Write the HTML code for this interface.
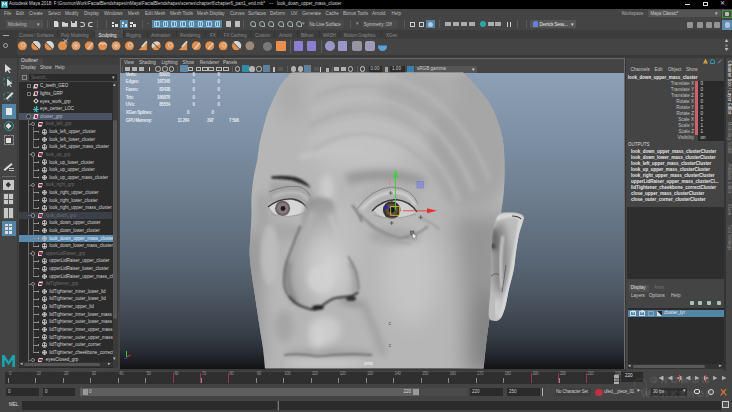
<!DOCTYPE html><html><head><meta charset="utf-8"><style>
*{margin:0;padding:0;box-sizing:border-box}
html,body{width:732px;height:412px;overflow:hidden;background:#444;font-family:"Liberation Sans",sans-serif}
div,body>svg{position:absolute}
.t{white-space:nowrap;line-height:1}
</style></head><body><div style="left:0px;top:0px;width:732px;height:9px;background:#000;"></div>
<div style="left:1px;top:1px;width:7px;height:6.5px;background:#1f8f97;"></div>
<div style="left:2.2px;top:2px;width:4.6px;height:4.5px;background:#e8f4f4;clip-path:polygon(0 100%,0 0,25% 0,50% 45%,75% 0,100% 0,100% 100%,75% 100%,75% 40%,50% 80%,25% 40%,25% 100%)"></div>
<div class="t" style="left:9px;top:1.70px;font-size:4.5px;color:#d8d8d8;">Autodesk Maya 2018: F:\GnomonWork\FacialBlendshapesInMaya\FacialBlendshapes\scenes\chapter6\chapter6_part1_end.mb*&nbsp;&nbsp;&nbsp;---&nbsp;&nbsp;&nbsp;look_down_upper_mass_cluster</div>
<div style="left:685px;top:4px;width:5px;height:0.8px;background:#ddd;"></div>
<div style="left:703px;top:2px;width:5px;height:4px;border:0.8px solid #ddd"></div>
<div class="t" style="left:719.5px;top:1.30px;font-size:5.5px;color:#ddd;">✕</div>
<div class="t" style="left:4px;top:12.20px;font-size:4.6px;color:#bdbdbd;">File</div>
<div class="t" style="left:16px;top:12.20px;font-size:4.6px;color:#bdbdbd;">Edit</div>
<div class="t" style="left:29px;top:12.20px;font-size:4.6px;color:#bdbdbd;">Create</div>
<div class="t" style="left:48px;top:12.20px;font-size:4.6px;color:#bdbdbd;">Select</div>
<div class="t" style="left:65px;top:12.20px;font-size:4.6px;color:#bdbdbd;">Modify</div>
<div class="t" style="left:84px;top:12.20px;font-size:4.6px;color:#bdbdbd;">Display</div>
<div class="t" style="left:104px;top:12.20px;font-size:4.6px;color:#bdbdbd;">Windows</div>
<div class="t" style="left:128px;top:12.20px;font-size:4.6px;color:#bdbdbd;">Mesh</div>
<div class="t" style="left:145px;top:12.20px;font-size:4.6px;color:#bdbdbd;">Edit Mesh</div>
<div class="t" style="left:170px;top:12.20px;font-size:4.6px;color:#bdbdbd;">Mesh Tools</div>
<div class="t" style="left:197px;top:12.20px;font-size:4.6px;color:#bdbdbd;">Mesh Display</div>
<div class="t" style="left:230px;top:12.20px;font-size:4.6px;color:#bdbdbd;">Curves</div>
<div class="t" style="left:248px;top:12.20px;font-size:4.6px;color:#bdbdbd;">Surfaces</div>
<div class="t" style="left:270px;top:12.20px;font-size:4.6px;color:#bdbdbd;">Deform</div>
<div class="t" style="left:291px;top:12.20px;font-size:4.6px;color:#bdbdbd;">UV</div>
<div class="t" style="left:302px;top:12.20px;font-size:4.6px;color:#bdbdbd;">Generate</div>
<div class="t" style="left:325.6px;top:12.20px;font-size:4.6px;color:#bdbdbd;">Cache</div>
<div class="t" style="left:343px;top:12.20px;font-size:4.6px;color:#bdbdbd;">Bonus Tools</div>
<div class="t" style="left:372px;top:12.20px;font-size:4.6px;color:#bdbdbd;">Arnold</div>
<div class="t" style="left:391.5px;top:12.20px;font-size:4.6px;color:#bdbdbd;">Help</div>
<div class="t" style="left:621.4px;top:11.95px;font-size:4.5px;color:#aaa;letter-spacing:-0.060px;">Workspace :</div>
<div style="left:648.3px;top:10.3px;width:72.7px;height:7.2px;background:#555;"></div>
<div class="t" style="left:650.5px;top:11.95px;font-size:4.5px;color:#ccc;letter-spacing:-0.060px;">Maya Classic*</div>
<div class="t" style="left:715px;top:11.30px;font-size:5px;color:#ccc;">▾</div>
<div style="left:722px;top:9.6px;width:10px;height:8.5px;border:0.8px solid #3c9a3c;background:#4a4a4a"></div>
<div style="left:725px;top:12.3px;width:4px;height:4px;background:#bbb;border-radius:1px"></div>
<div style="left:5.5px;top:20.3px;width:37px;height:7.6px;background:#505050;"></div>
<div class="t" style="left:8px;top:23.30px;font-size:4.6px;color:#bbb;">Modeling</div>
<div class="t" style="left:37px;top:22.30px;font-size:5px;color:#bbb;">▾</div>
<div style="left:47px;top:20px;width:0.8px;height:8px;background:#5a5a5a;"></div>
<div style="left:54px;top:20.8px;width:4.5px;height:6.2px;background:#d8d8d8;clip-path:polygon(0 0,65% 0,100% 30%,100% 100%,0 100%)"></div>
<div style="left:62px;top:22px;width:6px;height:4.8px;background:#d0d0d0;clip-path:polygon(0 0,40% 0,50% 20%,100% 20%,100% 100%,0 100%)"></div>
<div style="left:71px;top:21.2px;width:5.5px;height:5.6px;background:#d0d0d0;border-radius:0.5px"></div>
<div style="left:72.3px;top:21.2px;width:3px;height:2px;background:#444;"></div>
<div style="left:80px;top:22px;width:5px;height:4.5px;border:1px solid #d0d0d0;border-left-color:transparent;border-radius:0 3px 3px 0"></div>
<div style="left:88px;top:22px;width:5px;height:4.5px;border:1px solid #d0d0d0;border-right-color:transparent;border-radius:3px 0 0 3px"></div>
<div style="left:97px;top:20px;width:0.8px;height:8px;background:#5a5a5a;"></div>
<div style="left:106px;top:20px;width:0.8px;height:8px;background:#5a5a5a;"></div>
<div style="left:112px;top:21.5px;width:2px;height:2px;background:#ddd;"></div>
<div style="left:115px;top:24px;width:2.5px;height:2.5px;background:#ddd;"></div>
<div style="left:112px;top:25px;width:1.5px;height:1.5px;background:#ddd;"></div>
<div style="left:120px;top:20px;width:8px;height:8px;background:#5285a6;"></div>
<div style="left:121.5px;top:21.5px;width:2px;height:2px;background:#ddd;"></div>
<div style="left:124.5px;top:24px;width:2.5px;height:2.5px;background:#ddd;"></div>
<div style="left:121.5px;top:25px;width:1.5px;height:1.5px;background:#ddd;"></div>
<div style="left:130px;top:21.5px;width:2.5px;height:2.5px;background:#ddd;"></div>
<div style="left:133px;top:24px;width:2.5px;height:2.5px;background:#ddd;"></div>
<div style="left:130px;top:25px;width:1.5px;height:1.5px;background:#ddd;"></div>
<div style="left:142px;top:20px;width:0.8px;height:8px;background:#5a5a5a;"></div>
<div class="t" style="left:147px;top:21.00px;font-size:5px;color:#aaa;">-</div>
<div style="left:152px;top:20px;width:70px;height:8px;background:#5285a6;"></div>
<div style="left:154.0px;top:21px;width:5.5px;height:5.5px;border:0.7px solid #bfe0f0;border-radius:1px;opacity:.85"></div>
<div style="left:156.2px;top:21.8px;width:1px;height:4px;background:#bfe0f0;opacity:.8"></div>
<div style="left:162.7px;top:21px;width:5.5px;height:5.5px;border:0.7px solid #bfe0f0;border-radius:1px;opacity:.85"></div>
<div style="left:164.89999999999998px;top:21.8px;width:1px;height:4px;background:#bfe0f0;opacity:.8"></div>
<div style="left:171.4px;top:21px;width:5.5px;height:5.5px;border:0.7px solid #bfe0f0;border-radius:1px;opacity:.85"></div>
<div style="left:173.6px;top:21.8px;width:1px;height:4px;background:#bfe0f0;opacity:.8"></div>
<div style="left:180.1px;top:21px;width:5.5px;height:5.5px;border:0.7px solid #bfe0f0;border-radius:1px;opacity:.85"></div>
<div style="left:182.29999999999998px;top:21.8px;width:1px;height:4px;background:#bfe0f0;opacity:.8"></div>
<div style="left:188.8px;top:21px;width:5.5px;height:5.5px;border:0.7px solid #bfe0f0;border-radius:1px;opacity:.85"></div>
<div style="left:191.0px;top:21.8px;width:1px;height:4px;background:#bfe0f0;opacity:.8"></div>
<div style="left:197.5px;top:21px;width:5.5px;height:5.5px;border:0.7px solid #bfe0f0;border-radius:1px;opacity:.85"></div>
<div style="left:199.7px;top:21.8px;width:1px;height:4px;background:#bfe0f0;opacity:.8"></div>
<div style="left:206.2px;top:21px;width:5.5px;height:5.5px;border:0.7px solid #bfe0f0;border-radius:1px;opacity:.85"></div>
<div style="left:208.39999999999998px;top:21.8px;width:1px;height:4px;background:#bfe0f0;opacity:.8"></div>
<div style="left:214.89999999999998px;top:21px;width:5.5px;height:5.5px;border:0.7px solid #bfe0f0;border-radius:1px;opacity:.85"></div>
<div style="left:217.09999999999997px;top:21.8px;width:1px;height:4px;background:#bfe0f0;opacity:.8"></div>
<div style="left:226px;top:21px;width:5px;height:6px;background:#ddd;opacity:.8"></div>
<div style="left:235px;top:21px;width:5px;height:6px;background:#ddd;opacity:.8"></div>
<div style="left:243px;top:20px;width:0.8px;height:8px;background:#5a5a5a;"></div>
<div style="left:250.0px;top:21px;width:6px;height:6px;border:1.1px solid #c8d8d0;border-radius:3px 3px 0 3px;opacity:.75"></div>
<div style="left:259.2px;top:21px;width:6px;height:6px;border:1.1px solid #c8d8d0;border-radius:3px 3px 0 3px;opacity:.75"></div>
<div style="left:268.4px;top:21px;width:6px;height:6px;border:1.1px solid #c8d8d0;border-radius:3px 3px 0 3px;opacity:.75"></div>
<div style="left:277.6px;top:21px;width:6px;height:6px;border:1.1px solid #c8d8d0;border-radius:3px 3px 0 3px;opacity:.75"></div>
<div style="left:286.8px;top:21px;width:6px;height:6px;border:1.1px solid #c8d8d0;border-radius:3px 3px 0 3px;opacity:.75"></div>
<div style="left:296.0px;top:21px;width:6px;height:6px;border:1.1px solid #c8d8d0;border-radius:3px 3px 0 3px;opacity:.75"></div>
<div class="t" style="left:301.8px;top:22.30px;font-size:4.5px;color:#999;">▾</div>
<div style="left:307.8px;top:20.3px;width:36.4px;height:7.6px;background:#4a4a4a;"></div>
<div class="t" style="left:309.5px;top:23.15px;font-size:4.5px;color:#c8c8c8;letter-spacing:-0.060px;">No Live Surface</div>
<div style="left:350px;top:20px;width:0.8px;height:8px;background:#5a5a5a;"></div>
<div class="t" style="left:356.4px;top:22.30px;font-size:4.5px;color:#999;">▾</div>
<div style="left:362px;top:20.3px;width:36.3px;height:7.6px;background:#4a4a4a;"></div>
<div class="t" style="left:363.7px;top:23.15px;font-size:4.5px;color:#c8c8c8;letter-spacing:-0.060px;">Symmetry: Off</div>
<div style="left:404.2px;top:20px;width:0.8px;height:8px;background:#5a5a5a;"></div>
<div style="left:410px;top:21.5px;width:5px;height:5px;border:0.8px solid #ccc"></div>
<div style="left:419px;top:21.5px;width:5px;height:5px;border:0.8px solid #ccc"></div>
<div style="left:425.5px;top:19.5px;width:9.5px;height:8.8px;background:#5285a6;"></div>
<div style="left:428px;top:21.5px;width:4.5px;height:5px;background:#cde;opacity:.8;border-radius:50%"></div>
<div style="left:439px;top:20px;width:0.8px;height:8px;background:#5a5a5a;"></div>
<div style="left:445px;top:21.8px;width:6px;height:4.5px;background:#cfcfcf;opacity:.75"></div>
<div style="left:453px;top:21.8px;width:6px;height:4.5px;background:#cfcfcf;opacity:.75"></div>
<div style="left:461px;top:21.8px;width:6px;height:4.5px;background:#cfcfcf;opacity:.75"></div>
<div style="left:469px;top:21.8px;width:6px;height:4.5px;background:#cfcfcf;opacity:.75"></div>
<div style="left:487.5px;top:21.8px;width:6px;height:4.5px;background:#cfcfcf;opacity:.75"></div>
<div style="left:495px;top:21.8px;width:6px;height:4.5px;background:#cfcfcf;opacity:.75"></div>
<div style="left:479.6px;top:21.2px;width:6px;height:6px;background:#2aa7a7;border-radius:50%"></div>
<div style="left:507px;top:21.5px;width:1.2px;height:5px;background:#ccc;"></div>
<div style="left:509.8px;top:21.5px;width:1.2px;height:5px;background:#ccc;"></div>
<div style="left:517.2px;top:20px;width:0.8px;height:8px;background:#5a5a5a;"></div>
<div style="left:526px;top:20px;width:0.8px;height:8px;background:#5a5a5a;"></div>
<div style="left:530px;top:20px;width:46px;height:7.7px;background:#555;border-radius:1px"></div>
<div style="left:533px;top:21.3px;width:4.5px;height:5.5px;background:#6a7fd6;border-radius:2px 2px 0 0"></div>
<div class="t" style="left:539.5px;top:22.75px;font-size:4.5px;color:#eee;letter-spacing:-0.060px;">Derrick Sess...</div>
<div class="t" style="left:570.5px;top:21.80px;font-size:5px;color:#ddd;">▾</div>
<div style="left:687px;top:21.5px;width:6px;height:6px;background:#c8c8c8;opacity:.6;border-radius:1px"></div>
<div style="left:697px;top:21.5px;width:6px;height:6px;background:#c8c8c8;opacity:.6;border-radius:1px"></div>
<div style="left:706px;top:21.5px;width:6px;height:6px;background:#c8c8c8;opacity:.6;border-radius:1px"></div>
<div style="left:714px;top:21.5px;width:6px;height:6px;background:#c8c8c8;opacity:.6;border-radius:1px"></div>
<div style="left:722px;top:19.5px;width:10px;height:10px;background:#5d8ab0;"></div>
<div style="left:724.5px;top:21.5px;width:5px;height:6px;background:#cde;opacity:.7;border-radius:2px"></div>
<div style="left:0px;top:30px;width:732px;height:25px;background:#3f3f3f;"></div>
<div style="left:0px;top:30px;width:17px;height:25px;background:#3a3a3a;"></div>
<div style="left:2.5px;top:34.5px;width:6px;height:1px;background:#aaa;"></div>
<div style="left:3px;top:43px;width:5px;height:5px;border:0.9px solid #aaa;border-radius:50%"></div>
<div style="left:17px;top:30px;width:715px;height:8px;background:#3c3c3c;"></div>
<div style="left:17px;top:38.5px;width:715px;height:16.5px;background:#444;"></div>
<div style="left:94px;top:30px;width:29px;height:8px;background:#4a4a4a;"></div>
<div class="t" style="left:19px;top:34.25px;font-size:4.5px;color:#8a8a8a;letter-spacing:-0.060px;">Curves / Surfaces</div>
<div class="t" style="left:61px;top:34.25px;font-size:4.5px;color:#8a8a8a;letter-spacing:-0.060px;">Poly Modeling</div>
<div class="t" style="left:98.5px;top:34.25px;font-size:4.5px;color:#eee;letter-spacing:-0.060px;">Sculpting</div>
<div class="t" style="left:126px;top:34.25px;font-size:4.5px;color:#8a8a8a;letter-spacing:-0.060px;">Rigging</div>
<div class="t" style="left:151px;top:34.25px;font-size:4.5px;color:#8a8a8a;letter-spacing:-0.060px;">Animation</div>
<div class="t" style="left:180px;top:34.25px;font-size:4.5px;color:#8a8a8a;letter-spacing:-0.060px;">Rendering</div>
<div class="t" style="left:210px;top:34.25px;font-size:4.5px;color:#8a8a8a;letter-spacing:-0.060px;">FX</div>
<div class="t" style="left:223.7px;top:34.25px;font-size:4.5px;color:#8a8a8a;letter-spacing:-0.060px;">FX Caching</div>
<div class="t" style="left:255px;top:34.25px;font-size:4.5px;color:#8a8a8a;letter-spacing:-0.060px;">Custom</div>
<div class="t" style="left:279px;top:34.25px;font-size:4.5px;color:#8a8a8a;letter-spacing:-0.060px;">Arnold</div>
<div class="t" style="left:301px;top:34.25px;font-size:4.5px;color:#8a8a8a;letter-spacing:-0.060px;">Bifrost</div>
<div class="t" style="left:323px;top:34.25px;font-size:4.5px;color:#8a8a8a;letter-spacing:-0.060px;">MASH</div>
<div class="t" style="left:343.7px;top:34.25px;font-size:4.5px;color:#8a8a8a;letter-spacing:-0.060px;">Motion Graphics</div>
<div class="t" style="left:386px;top:34.25px;font-size:4.5px;color:#8a8a8a;letter-spacing:-0.060px;">XGen</div>
<div style="left:57px;top:31px;width:0.7px;height:6px;background:#333;"></div>
<div style="left:94px;top:31px;width:0.7px;height:6px;background:#333;"></div>
<div style="left:123px;top:31px;width:0.7px;height:6px;background:#333;"></div>
<div style="left:147px;top:31px;width:0.7px;height:6px;background:#333;"></div>
<div style="left:176px;top:31px;width:0.7px;height:6px;background:#333;"></div>
<div style="left:205px;top:31px;width:0.7px;height:6px;background:#333;"></div>
<div style="left:218px;top:31px;width:0.7px;height:6px;background:#333;"></div>
<div style="left:250px;top:31px;width:0.7px;height:6px;background:#333;"></div>
<div style="left:274px;top:31px;width:0.7px;height:6px;background:#333;"></div>
<div style="left:297px;top:31px;width:0.7px;height:6px;background:#333;"></div>
<div style="left:319px;top:31px;width:0.7px;height:6px;background:#333;"></div>
<div style="left:339px;top:31px;width:0.7px;height:6px;background:#333;"></div>
<div style="left:381px;top:31px;width:0.7px;height:6px;background:#333;"></div>
<svg width="732" height="20" viewBox="0 38 732 20" style="left:0;top:38px"><circle cx="22.4" cy="45.8" r="4.8" fill="#e2904e" stroke="#2e2e2e" stroke-width="0.5"/><circle cx="23.2" cy="45.0" r="2" fill="none" stroke="#d6d6d6" stroke-width="0.8"/><circle cx="35.78" cy="45.8" r="4.8" fill="#e2904e" stroke="#2e2e2e" stroke-width="0.5"/><path d="M32.38 42.4 A4.8 4.8 0 0 1 39.18 49.199999999999996 Z" fill="#d6d6d6"/><path d="M32.18 42.199999999999996 L39.38 49.4" stroke="#2e2e2e" stroke-width="0.9"/><circle cx="49.16" cy="45.8" r="4.8" fill="#e2904e" stroke="#2e2e2e" stroke-width="0.5"/><path d="M45.76 42.4 A4.8 4.8 0 0 1 52.559999999999995 49.199999999999996 Z" fill="#d6d6d6"/><path d="M45.559999999999995 42.199999999999996 L52.76 49.4" stroke="#2e2e2e" stroke-width="0.9"/><circle cx="62.54" cy="45.8" r="4.8" fill="#e2904e" stroke="#2e2e2e" stroke-width="0.5"/><path d="M63.54 42.8 L67.53999999999999 39.3 M63.54 39.3 L67.53999999999999 42.8" stroke="#d6d6d6" stroke-width="0.9"/><circle cx="75.92" cy="45.8" r="4.8" fill="#e2904e" stroke="#2e2e2e" stroke-width="0.5"/><path d="M71.92 45.8 H79.92 M75.92 41.8 V49.8 M72.92 42.8 L78.92 48.8 M72.92 48.8 L78.92 42.8" stroke="#d6d6d6" stroke-width="0.6"/><circle cx="89.30000000000001" cy="45.8" r="4.8" fill="#e2904e" stroke="#2e2e2e" stroke-width="0.5"/><path d="M87.80000000000001 48.8 L92.80000000000001 42.8" stroke="#d6d6d6" stroke-width="1.3"/><circle cx="102.68" cy="45.8" r="4.8" fill="#e2904e" stroke="#2e2e2e" stroke-width="0.5"/><path d="M98.68 45.3 Q100.68 41.8 102.68 44.3 Q104.68 41.8 106.68 45.3" stroke="#d6d6d6" stroke-width="1.1" fill="none"/><circle cx="116.06" cy="45.8" r="4.8" fill="#e2904e" stroke="#2e2e2e" stroke-width="0.5"/><path d="M112.06 45.8 H120.06 M116.06 41.8 V49.8 M113.06 42.8 L119.06 48.8 M113.06 48.8 L119.06 42.8" stroke="#d6d6d6" stroke-width="0.6"/><circle cx="129.44" cy="45.8" r="4.8" fill="#e2904e" stroke="#2e2e2e" stroke-width="0.5"/><circle cx="130.24" cy="45.0" r="2" fill="none" stroke="#d6d6d6" stroke-width="0.8"/><path d="M137.82 50.599999999999994 L147.32 50.599999999999994 L147.32 41.0 Z" fill="#e2904e" stroke="#2e2e2e" stroke-width="0.5"/><path d="M141.82 46.8 L146.82 41.3" stroke="#d6d6d6" stroke-width="1.8"/><circle cx="156.20000000000002" cy="45.8" r="4.8" fill="#e2904e" stroke="#2e2e2e" stroke-width="0.5"/><path d="M152.00000000000003 48.0 A4.8 4.8 0 0 1 160.4 43.599999999999994 Z" fill="#d6d6d6"/><path d="M152.60000000000002 42.199999999999996 L159.8 49.4" stroke="#2e2e2e" stroke-width="0.9"/><circle cx="169.58" cy="45.8" r="4.8" fill="#e2904e" stroke="#2e2e2e" stroke-width="0.5"/><circle cx="170.38000000000002" cy="45.0" r="2" fill="none" stroke="#d6d6d6" stroke-width="0.8"/><path d="M177.96 50.599999999999994 L187.46 50.599999999999994 L187.46 41.0 Z" fill="#e2904e" stroke="#2e2e2e" stroke-width="0.5"/><path d="M181.96 46.8 L186.96 41.3" stroke="#d6d6d6" stroke-width="1.8"/><circle cx="196.34" cy="45.8" r="4.8" fill="#e2904e" stroke="#2e2e2e" stroke-width="0.5"/><path d="M194.84 48.8 L199.84 42.8" stroke="#d6d6d6" stroke-width="1.3"/><circle cx="209.72000000000003" cy="45.8" r="4.8" fill="#e2904e" stroke="#2e2e2e" stroke-width="0.5"/><path d="M208.22000000000003 48.8 L213.22000000000003 42.8" stroke="#d6d6d6" stroke-width="1.3"/><circle cx="223.10000000000002" cy="45.8" r="4.8" fill="#e2904e" stroke="#2e2e2e" stroke-width="0.5"/><circle cx="223.90000000000003" cy="45.0" r="2" fill="none" stroke="#d6d6d6" stroke-width="0.8"/><circle cx="236.48000000000002" cy="45.8" r="4.8" fill="#e2904e" stroke="#2e2e2e" stroke-width="0.5"/><path d="M233.08 42.4 A4.8 4.8 0 0 1 239.88000000000002 49.199999999999996 Z" fill="#d6d6d6"/><path d="M232.88000000000002 42.199999999999996 L240.08 49.4" stroke="#2e2e2e" stroke-width="0.9"/><circle cx="249.86" cy="45.8" r="4.8" fill="#9a8878" stroke="#2e2e2e" stroke-width="0.5"/></svg>
<div style="left:263px;top:41.5px;width:9px;height:9px;background:#bbb;border-radius:50%;opacity:.45"></div>
<div style="left:276px;top:41px;width:9.5px;height:10px;background:#e8904c;border-radius:1px"></div>
<div style="left:289.6px;top:40px;width:0.8px;height:13px;background:#5a5a5a;"></div>
<div style="left:294px;top:41px;width:9px;height:10px;background:#8a7fd0;border-radius:1px"></div>
<div style="left:307px;top:41px;width:9px;height:10px;background:#8a7fd0;border-radius:1px"></div>
<div style="left:321px;top:40px;width:0.8px;height:13px;background:#5a5a5a;"></div>
<div style="left:325px;top:41px;width:9.5px;height:9.5px;background:#9a96c8;border-radius:50%"></div>
<div style="left:338px;top:41px;width:9px;height:10px;background:#9a96c8;border-radius:1px"></div>
<div style="left:352px;top:41px;width:10px;height:10px;background:#aab;border-radius:2px;opacity:.8"></div>
<div style="left:365px;top:41px;width:10px;height:10px;background:#b6b0d8;border-radius:2px;opacity:.8"></div>
<div style="left:378px;top:42px;width:9px;height:9px;background:#5aa0d8;border-radius:50%;clip-path:polygon(0 40%,100% 40%,100% 100%,0 100%)"></div>
<div style="left:724.5px;top:39px;width:4px;height:3px;background:#bbb;clip-path:polygon(50% 0,100% 100%,0 100%)"></div>
<div style="left:725px;top:43.5px;width:3px;height:3px;background:#777;border-radius:50%"></div>
<div style="left:724.5px;top:48px;width:4px;height:3px;background:#bbb;clip-path:polygon(0 0,100% 0,50% 100%)"></div>
<div style="left:0px;top:55px;width:732px;height:2.5px;background:#393939;"></div>
<div style="left:0px;top:57.5px;width:17px;height:313px;background:#444;"></div>
<div style="left:16.5px;top:57.5px;width:1.5px;height:313px;background:#3a3a3a;"></div>
<div style="left:5px;top:64px;width:6.5px;height:9px;background:#d8d8d8;clip-path:polygon(0 0,100% 62%,58% 66%,85% 100%,65% 100%,40% 72%,0 95%)"></div>
<div style="left:3px;top:77px;width:9px;height:9px;border:1px dashed #2a9a9a;border-radius:50%"></div>
<div style="left:7px;top:78.5px;width:5.5px;height:8.5px;background:#d8d8d8;clip-path:polygon(0 0,100% 62%,58% 66%,85% 100%,65% 100%,40% 72%,0 95%)"></div>
<div style="left:3px;top:92px;width:9px;height:9px;border:1px dashed #2a9a9a;border-radius:50%"></div>
<div style="left:5px;top:95px;width:9px;height:1.6px;background:#e0e0e0;transform:rotate(-45deg)"></div>
<div style="left:1.5px;top:104px;width:14px;height:14.8px;background:#5285a6;"></div>
<div style="left:5.5px;top:108px;width:6px;height:6.5px;background:#e8e8e8;"></div>
<div style="left:3.5px;top:121px;width:10px;height:10px;border:1.2px solid #2a9a9a;border-radius:50%"></div>
<div style="left:5.5px;top:123px;width:6px;height:6px;background:#e0e0e0;clip-path:polygon(50% 0,100% 50%,50% 100%,0 50%)"></div>
<div style="left:3.5px;top:135px;width:10px;height:10px;border:0.8px dashed #888"></div>
<div style="left:5.5px;top:138px;width:5px;height:5px;background:#e0e0e0;"></div>
<div style="left:3px;top:166px;width:10px;height:1.8px;background:#ddd;transform:rotate(-40deg)"></div>
<div style="left:9px;top:168px;width:5px;height:0.6px;background:#bbb;"></div>
<div style="left:9px;top:170px;width:5px;height:0.6px;background:#bbb;"></div>
<div style="left:1.5px;top:176px;width:14px;height:0.8px;background:#666;"></div>
<div style="left:3px;top:179.7px;width:10.5px;height:10.3px;background:#c8c8c8;"></div>
<div style="left:5.5px;top:182px;width:5.5px;height:5.5px;background:#333;clip-path:polygon(50% 0,100% 50%,50% 100%,0 50%)"></div>
<div style="left:3px;top:193.4px;width:10.5px;height:11.4px;background:#555;"></div>
<div style="left:3.5px;top:194px;width:4.5px;height:4.8px;background:#c8c8c8;"></div>
<div style="left:8.7px;top:194px;width:4.5px;height:4.8px;background:#c8c8c8;"></div>
<div style="left:3.5px;top:199.5px;width:4.5px;height:4.8px;background:#c8c8c8;"></div>
<div style="left:8.7px;top:199.5px;width:4.5px;height:4.8px;background:#c8c8c8;"></div>
<div style="left:3px;top:207.5px;width:10.5px;height:11px;background:#555;"></div>
<div style="left:3.5px;top:208px;width:4.5px;height:10px;background:#c8c8c8;"></div>
<div style="left:8.7px;top:208px;width:4.5px;height:10px;background:#c8c8c8;"></div>
<div style="left:1.5px;top:220.8px;width:14px;height:14.8px;background:#5285a6;"></div>
<div style="left:5px;top:223.5px;width:2.5px;height:2.5px;background:#ddd;"></div>
<div style="left:9px;top:223.5px;width:2.5px;height:2.5px;background:#ddd;"></div>
<div style="left:5px;top:227.3px;width:2.5px;height:2.5px;background:#ddd;"></div>
<div style="left:9px;top:227.3px;width:2.5px;height:2.5px;background:#ddd;"></div>
<div style="left:5px;top:231.1px;width:2.5px;height:2.5px;background:#ddd;"></div>
<div style="left:9px;top:231.1px;width:2.5px;height:2.5px;background:#ddd;"></div>
<div style="left:2px;top:355px;width:13px;height:12px;background:#18a3ad;clip-path:polygon(0 100%,0 0,20% 0,50% 55%,80% 0,100% 0,100% 100%,80% 100%,80% 40%,50% 85%,20% 40%,20% 100%)"></div>
<div style="left:18px;top:57.5px;width:101px;height:313px;background:#3e3e3e;"></div>
<div style="left:18.5px;top:58px;width:24px;height:6.5px;background:#484848;"></div>
<div class="t" style="left:21px;top:59.30px;font-size:4.8px;color:#ddd;">Outliner</div>
<div style="left:18px;top:64.5px;width:101px;height:306px;background:#444;"></div>
<div class="t" style="left:21px;top:66.30px;font-size:4.6px;color:#c8c8c8;">Display</div>
<div class="t" style="left:40px;top:66.30px;font-size:4.6px;color:#c8c8c8;">Show</div>
<div class="t" style="left:55px;top:66.30px;font-size:4.6px;color:#c8c8c8;">Help</div>
<div style="left:22px;top:75px;width:5px;height:5px;border:0.7px dashed #888"></div>
<div style="left:29px;top:74px;width:88px;height:7px;background:#2b2b2b;"></div>
<div class="t" style="left:31px;top:75.50px;font-size:4.6px;color:#666;">Search...</div>
<div class="t" style="left:112px;top:75.00px;font-size:5px;color:#bbb;">▾</div>
<div style="left:19px;top:82px;width:94px;height:286px;background:#2b2b2b;"></div>
<div style="left:113px;top:82px;width:4.5px;height:286px;background:#3a3a3a;"></div>
<div style="left:113.3px;top:119.5px;width:4px;height:199px;background:#555;border-radius:2px"></div>
<div class="t" style="left:113.3px;top:82.50px;font-size:4.5px;color:#bbb;">▴</div>
<div style="left:0;top:0;width:113px;height:362.5px;overflow:hidden">
<div style="left:28.4px;top:119.53999999999999px;width:0.6px;height:243.52px;background:#6a6a6a;"></div>
<div style="left:32.8px;top:126.65px;width:0.6px;height:20.330000000000002px;background:#6a6a6a;"></div>
<div style="left:32.8px;top:157.09px;width:0.6px;height:20.330000000000002px;background:#6a6a6a;"></div>
<div style="left:32.8px;top:187.53px;width:0.6px;height:20.330000000000002px;background:#6a6a6a;"></div>
<div style="left:32.8px;top:217.97px;width:0.6px;height:27.94px;background:#6a6a6a;"></div>
<div style="left:32.8px;top:256.02px;width:0.6px;height:20.330000000000002px;background:#6a6a6a;"></div>
<div style="left:32.8px;top:286.46000000000004px;width:0.6px;height:65.99000000000001px;background:#6a6a6a;"></div>
<div style="left:26.5px;top:84.1px;width:4px;height:4px;border:0.6px solid #777"></div>
<div style="left:33px;top:83.6px;width:5.5px;height:5px;background:#d0d0d0;clip-path:polygon(25% 0,100% 0,75% 100%,0 100%)"></div>
<div style="left:34.5px;top:84.8px;width:2.5px;height:2.6px;background:#a02848;"></div>
<div class="t" style="left:40px;top:84.40px;font-size:4.5px;color:#d8d8d8;">C_teeth_GEO</div>
<div style="left:26.5px;top:91.71px;width:4px;height:4px;border:0.6px solid #777"></div>
<div style="left:33px;top:91.21px;width:5.5px;height:5px;background:#d0d0d0;clip-path:polygon(25% 0,100% 0,75% 100%,0 100%)"></div>
<div style="left:34.5px;top:92.41px;width:2.5px;height:2.6px;background:#a02848;"></div>
<div class="t" style="left:40px;top:92.01px;font-size:4.5px;color:#d8d8d8;">lights_GRP</div>
<div style="left:34px;top:99.32px;width:4px;height:4px;border:1px solid #ddd;transform:rotate(45deg)"></div>
<div class="t" style="left:40px;top:99.62px;font-size:4.5px;color:#d8d8d8;">eyes_work_grp</div>
<div style="left:35.5px;top:105.92999999999999px;width:0.8px;height:6px;background:#40c0c0;"></div>
<div style="left:33px;top:108.52999999999999px;width:5.6px;height:0.8px;background:#40c0c0;"></div>
<div style="left:33px;top:108.52999999999999px;width:5.6px;height:0.8px;background:#40c0c0;transform:rotate(60deg)"></div>
<div style="left:33px;top:108.52999999999999px;width:5.6px;height:0.8px;background:#40c0c0;transform:rotate(-60deg)"></div>
<div class="t" style="left:40px;top:107.23px;font-size:4.5px;color:#d8d8d8;">eye_center_LOC</div>
<div style="left:19.3px;top:113.03999999999999px;width:92.5px;height:7px;background:#4a5363;"></div>
<div style="left:26.4px;top:114.33999999999999px;width:4.4px;height:4.4px;border:0.6px solid #888;border-radius:50%;background:#2b2b2b"></div>
<div style="left:33px;top:114.03999999999999px;width:5.5px;height:5px;background:#d0d0d0;clip-path:polygon(25% 0,100% 0,75% 100%,0 100%)"></div>
<div style="left:34.5px;top:115.24px;width:2.5px;height:2.6px;background:#a02848;"></div>
<div class="t" style="left:40px;top:114.84px;font-size:4.5px;color:#b8c0d0;">cluster_grp</div>
<div style="left:28.4px;top:123.85000000000001px;width:3px;height:0.6px;background:#6a6a6a;"></div>
<div style="left:30.8px;top:121.95px;width:4.4px;height:4.4px;border:0.6px solid #888;border-radius:50%;background:#2b2b2b"></div>
<div style="left:37.5px;top:121.65px;width:5.5px;height:5px;background:#d0d0d0;clip-path:polygon(25% 0,100% 0,75% 100%,0 100%)"></div>
<div style="left:39px;top:122.85000000000001px;width:2.5px;height:2.6px;background:#a02848;"></div>
<div class="t" style="left:45.8px;top:122.45px;font-size:4.5px;color:#6f6f6f;">look_left_grp</div>
<div style="left:32.8px;top:131.45999999999998px;width:5.8px;height:0.6px;background:#8a8a8a;"></div>
<div style="left:37.8px;top:130.66px;width:1.6px;height:2.2px;background:#bbb;clip-path:polygon(0 0,100% 50%,0 100%)"></div>
<div style="left:41.6px;top:128.95999999999998px;width:5.6px;height:5.6px;border:0.5px solid #b8b8b8;border-radius:50%"></div>
<div style="left:44.2px;top:129.16px;width:0.45px;height:5.2px;background:#b8b8b8;"></div>
<div style="left:41.8px;top:131.54px;width:5.2px;height:0.45px;background:#b8b8b8;"></div>
<div class="t" style="left:49.3px;top:130.06px;font-size:4.5px;color:#d4d4d4;">look_left_upper_cluster</div>
<div style="left:32.8px;top:139.07px;width:5.8px;height:0.6px;background:#8a8a8a;"></div>
<div style="left:37.8px;top:138.27px;width:1.6px;height:2.2px;background:#bbb;clip-path:polygon(0 0,100% 50%,0 100%)"></div>
<div style="left:41.6px;top:136.57px;width:5.6px;height:5.6px;border:0.5px solid #b8b8b8;border-radius:50%"></div>
<div style="left:44.2px;top:136.77px;width:0.45px;height:5.2px;background:#b8b8b8;"></div>
<div style="left:41.8px;top:139.15px;width:5.2px;height:0.45px;background:#b8b8b8;"></div>
<div class="t" style="left:49.3px;top:137.67px;font-size:4.5px;color:#d4d4d4;">look_left_lower_cluster</div>
<div style="left:32.8px;top:146.67999999999998px;width:5.8px;height:0.6px;background:#8a8a8a;"></div>
<div style="left:37.8px;top:145.88px;width:1.6px;height:2.2px;background:#bbb;clip-path:polygon(0 0,100% 50%,0 100%)"></div>
<div style="left:41.6px;top:144.17999999999998px;width:5.6px;height:5.6px;border:0.5px solid #b8b8b8;border-radius:50%"></div>
<div style="left:44.2px;top:144.38px;width:0.45px;height:5.2px;background:#b8b8b8;"></div>
<div style="left:41.8px;top:146.76px;width:5.2px;height:0.45px;background:#b8b8b8;"></div>
<div class="t" style="left:49.3px;top:145.28px;font-size:4.5px;color:#d4d4d4;">look_left_upper_mass_cluster</div>
<div style="left:28.4px;top:154.29px;width:3px;height:0.6px;background:#6a6a6a;"></div>
<div style="left:30.8px;top:152.39000000000001px;width:4.4px;height:4.4px;border:0.6px solid #888;border-radius:50%;background:#2b2b2b"></div>
<div style="left:37.5px;top:152.09px;width:5.5px;height:5px;background:#d0d0d0;clip-path:polygon(25% 0,100% 0,75% 100%,0 100%)"></div>
<div style="left:39px;top:153.29px;width:2.5px;height:2.6px;background:#a02848;"></div>
<div class="t" style="left:45.8px;top:152.89px;font-size:4.5px;color:#6f6f6f;">look_up_grp</div>
<div style="left:32.8px;top:161.89999999999998px;width:5.8px;height:0.6px;background:#8a8a8a;"></div>
<div style="left:37.8px;top:161.1px;width:1.6px;height:2.2px;background:#bbb;clip-path:polygon(0 0,100% 50%,0 100%)"></div>
<div style="left:41.6px;top:159.39999999999998px;width:5.6px;height:5.6px;border:0.5px solid #b8b8b8;border-radius:50%"></div>
<div style="left:44.2px;top:159.6px;width:0.45px;height:5.2px;background:#b8b8b8;"></div>
<div style="left:41.8px;top:161.98px;width:5.2px;height:0.45px;background:#b8b8b8;"></div>
<div class="t" style="left:49.3px;top:160.50px;font-size:4.5px;color:#d4d4d4;">look_up_lower_cluster</div>
<div style="left:32.8px;top:169.51px;width:5.8px;height:0.6px;background:#8a8a8a;"></div>
<div style="left:37.8px;top:168.71px;width:1.6px;height:2.2px;background:#bbb;clip-path:polygon(0 0,100% 50%,0 100%)"></div>
<div style="left:41.6px;top:167.01px;width:5.6px;height:5.6px;border:0.5px solid #b8b8b8;border-radius:50%"></div>
<div style="left:44.2px;top:167.21px;width:0.45px;height:5.2px;background:#b8b8b8;"></div>
<div style="left:41.8px;top:169.59px;width:5.2px;height:0.45px;background:#b8b8b8;"></div>
<div class="t" style="left:49.3px;top:168.11px;font-size:4.5px;color:#d4d4d4;">look_up_upper_cluster</div>
<div style="left:32.8px;top:177.12px;width:5.8px;height:0.6px;background:#8a8a8a;"></div>
<div style="left:37.8px;top:176.32000000000002px;width:1.6px;height:2.2px;background:#bbb;clip-path:polygon(0 0,100% 50%,0 100%)"></div>
<div style="left:41.6px;top:174.62px;width:5.6px;height:5.6px;border:0.5px solid #b8b8b8;border-radius:50%"></div>
<div style="left:44.2px;top:174.82000000000002px;width:0.45px;height:5.2px;background:#b8b8b8;"></div>
<div style="left:41.8px;top:177.20000000000002px;width:5.2px;height:0.45px;background:#b8b8b8;"></div>
<div class="t" style="left:49.3px;top:175.72px;font-size:4.5px;color:#d4d4d4;">look_up_upper_mass_cluster</div>
<div style="left:28.4px;top:184.73px;width:3px;height:0.6px;background:#6a6a6a;"></div>
<div style="left:30.8px;top:182.83px;width:4.4px;height:4.4px;border:0.6px solid #888;border-radius:50%;background:#2b2b2b"></div>
<div style="left:37.5px;top:182.53px;width:5.5px;height:5px;background:#d0d0d0;clip-path:polygon(25% 0,100% 0,75% 100%,0 100%)"></div>
<div style="left:39px;top:183.73px;width:2.5px;height:2.6px;background:#a02848;"></div>
<div class="t" style="left:45.8px;top:183.33px;font-size:4.5px;color:#6f6f6f;">look_right_grp</div>
<div style="left:32.8px;top:192.33999999999997px;width:5.8px;height:0.6px;background:#8a8a8a;"></div>
<div style="left:37.8px;top:191.54px;width:1.6px;height:2.2px;background:#bbb;clip-path:polygon(0 0,100% 50%,0 100%)"></div>
<div style="left:41.6px;top:189.83999999999997px;width:5.6px;height:5.6px;border:0.5px solid #b8b8b8;border-radius:50%"></div>
<div style="left:44.2px;top:190.04px;width:0.45px;height:5.2px;background:#b8b8b8;"></div>
<div style="left:41.8px;top:192.42px;width:5.2px;height:0.45px;background:#b8b8b8;"></div>
<div class="t" style="left:49.3px;top:190.94px;font-size:4.5px;color:#d4d4d4;">look_right_upper_cluster</div>
<div style="left:32.8px;top:199.95px;width:5.8px;height:0.6px;background:#8a8a8a;"></div>
<div style="left:37.8px;top:199.15px;width:1.6px;height:2.2px;background:#bbb;clip-path:polygon(0 0,100% 50%,0 100%)"></div>
<div style="left:41.6px;top:197.45px;width:5.6px;height:5.6px;border:0.5px solid #b8b8b8;border-radius:50%"></div>
<div style="left:44.2px;top:197.65px;width:0.45px;height:5.2px;background:#b8b8b8;"></div>
<div style="left:41.8px;top:200.03px;width:5.2px;height:0.45px;background:#b8b8b8;"></div>
<div class="t" style="left:49.3px;top:198.55px;font-size:4.5px;color:#d4d4d4;">look_right_lower_cluster</div>
<div style="left:32.8px;top:207.56px;width:5.8px;height:0.6px;background:#8a8a8a;"></div>
<div style="left:37.8px;top:206.76000000000002px;width:1.6px;height:2.2px;background:#bbb;clip-path:polygon(0 0,100% 50%,0 100%)"></div>
<div style="left:41.6px;top:205.06px;width:5.6px;height:5.6px;border:0.5px solid #b8b8b8;border-radius:50%"></div>
<div style="left:44.2px;top:205.26000000000002px;width:0.45px;height:5.2px;background:#b8b8b8;"></div>
<div style="left:41.8px;top:207.64000000000001px;width:5.2px;height:0.45px;background:#b8b8b8;"></div>
<div class="t" style="left:49.3px;top:206.16px;font-size:4.5px;color:#d4d4d4;">look_right_upper_mass_cluster</div>
<div style="left:19.3px;top:211.97px;width:92.5px;height:7px;background:#3b3f47;"></div>
<div style="left:28.4px;top:215.17px;width:3px;height:0.6px;background:#6a6a6a;"></div>
<div style="left:30.8px;top:213.27px;width:4.4px;height:4.4px;border:0.6px solid #888;border-radius:50%;background:#2b2b2b"></div>
<div style="left:37.5px;top:212.97px;width:5.5px;height:5px;background:#d0d0d0;clip-path:polygon(25% 0,100% 0,75% 100%,0 100%)"></div>
<div style="left:39px;top:214.17px;width:2.5px;height:2.6px;background:#a02848;"></div>
<div class="t" style="left:45.8px;top:213.77px;font-size:4.5px;color:#6f6f6f;">look_down_grp</div>
<div style="left:32.8px;top:222.78px;width:5.8px;height:0.6px;background:#8a8a8a;"></div>
<div style="left:37.8px;top:221.98000000000002px;width:1.6px;height:2.2px;background:#bbb;clip-path:polygon(0 0,100% 50%,0 100%)"></div>
<div style="left:41.6px;top:220.28px;width:5.6px;height:5.6px;border:0.5px solid #b8b8b8;border-radius:50%"></div>
<div style="left:44.2px;top:220.48000000000002px;width:0.45px;height:5.2px;background:#b8b8b8;"></div>
<div style="left:41.8px;top:222.86px;width:5.2px;height:0.45px;background:#b8b8b8;"></div>
<div class="t" style="left:49.3px;top:221.38px;font-size:4.5px;color:#d4d4d4;">look_down_upper_cluster</div>
<div style="left:32.8px;top:230.39px;width:5.8px;height:0.6px;background:#8a8a8a;"></div>
<div style="left:37.8px;top:229.59px;width:1.6px;height:2.2px;background:#bbb;clip-path:polygon(0 0,100% 50%,0 100%)"></div>
<div style="left:41.6px;top:227.89px;width:5.6px;height:5.6px;border:0.5px solid #b8b8b8;border-radius:50%"></div>
<div style="left:44.2px;top:228.09px;width:0.45px;height:5.2px;background:#b8b8b8;"></div>
<div style="left:41.8px;top:230.47px;width:5.2px;height:0.45px;background:#b8b8b8;"></div>
<div class="t" style="left:49.3px;top:228.99px;font-size:4.5px;color:#d4d4d4;">look_down_lower_cluster</div>
<div style="left:19.3px;top:234.70000000000002px;width:93.7px;height:7.2px;background:#5a8ab0;"></div>
<div style="left:32.8px;top:238.0px;width:5.8px;height:0.6px;background:#8a8a8a;"></div>
<div style="left:37.8px;top:237.20000000000002px;width:1.6px;height:2.2px;background:#bbb;clip-path:polygon(0 0,100% 50%,0 100%)"></div>
<div style="left:41.6px;top:235.5px;width:5.6px;height:5.6px;border:0.5px solid #b8b8b8;border-radius:50%"></div>
<div style="left:44.2px;top:235.70000000000002px;width:0.45px;height:5.2px;background:#b8b8b8;"></div>
<div style="left:41.8px;top:238.08px;width:5.2px;height:0.45px;background:#b8b8b8;"></div>
<div class="t" style="left:49.3px;top:236.60px;font-size:4.5px;color:#f2f2f2;">look_down_upper_mass_cluster</div>
<div style="left:32.8px;top:245.60999999999999px;width:5.8px;height:0.6px;background:#8a8a8a;"></div>
<div style="left:37.8px;top:244.81px;width:1.6px;height:2.2px;background:#bbb;clip-path:polygon(0 0,100% 50%,0 100%)"></div>
<div style="left:41.6px;top:243.10999999999999px;width:5.6px;height:5.6px;border:0.5px solid #b8b8b8;border-radius:50%"></div>
<div style="left:44.2px;top:243.31px;width:0.45px;height:5.2px;background:#b8b8b8;"></div>
<div style="left:41.8px;top:245.69px;width:5.2px;height:0.45px;background:#b8b8b8;"></div>
<div class="t" style="left:49.3px;top:244.21px;font-size:4.5px;color:#d4d4d4;">look_down_lower_mass_cluster</div>
<div style="left:28.4px;top:253.22px;width:3px;height:0.6px;background:#6a6a6a;"></div>
<div style="left:30.8px;top:251.32000000000002px;width:4.4px;height:4.4px;border:0.6px solid #888;border-radius:50%;background:#2b2b2b"></div>
<div style="left:37.5px;top:251.02px;width:5.5px;height:5px;background:#d0d0d0;clip-path:polygon(25% 0,100% 0,75% 100%,0 100%)"></div>
<div style="left:39px;top:252.22px;width:2.5px;height:2.6px;background:#a02848;"></div>
<div class="t" style="left:45.8px;top:251.82px;font-size:4.5px;color:#6f6f6f;">upperLidRaiser_grp</div>
<div style="left:32.8px;top:260.83px;width:5.8px;height:0.6px;background:#8a8a8a;"></div>
<div style="left:37.8px;top:260.03px;width:1.6px;height:2.2px;background:#bbb;clip-path:polygon(0 0,100% 50%,0 100%)"></div>
<div style="left:41.6px;top:258.33px;width:5.6px;height:5.6px;border:0.5px solid #b8b8b8;border-radius:50%"></div>
<div style="left:44.2px;top:258.53px;width:0.45px;height:5.2px;background:#b8b8b8;"></div>
<div style="left:41.8px;top:260.90999999999997px;width:5.2px;height:0.45px;background:#b8b8b8;"></div>
<div class="t" style="left:49.3px;top:259.43px;font-size:4.5px;color:#d4d4d4;">upperLidRaiser_upper_cluster</div>
<div style="left:32.8px;top:268.44px;width:5.8px;height:0.6px;background:#8a8a8a;"></div>
<div style="left:37.8px;top:267.64px;width:1.6px;height:2.2px;background:#bbb;clip-path:polygon(0 0,100% 50%,0 100%)"></div>
<div style="left:41.6px;top:265.94px;width:5.6px;height:5.6px;border:0.5px solid #b8b8b8;border-radius:50%"></div>
<div style="left:44.2px;top:266.14px;width:0.45px;height:5.2px;background:#b8b8b8;"></div>
<div style="left:41.8px;top:268.52px;width:5.2px;height:0.45px;background:#b8b8b8;"></div>
<div class="t" style="left:49.3px;top:267.04px;font-size:4.5px;color:#d4d4d4;">upperLidRaiser_lower_cluster</div>
<div style="left:32.8px;top:276.05px;width:5.8px;height:0.6px;background:#8a8a8a;"></div>
<div style="left:37.8px;top:275.25px;width:1.6px;height:2.2px;background:#bbb;clip-path:polygon(0 0,100% 50%,0 100%)"></div>
<div style="left:41.6px;top:273.55px;width:5.6px;height:5.6px;border:0.5px solid #b8b8b8;border-radius:50%"></div>
<div style="left:44.2px;top:273.75px;width:0.45px;height:5.2px;background:#b8b8b8;"></div>
<div style="left:41.8px;top:276.13px;width:5.2px;height:0.45px;background:#b8b8b8;"></div>
<div class="t" style="left:49.3px;top:274.65px;font-size:4.5px;color:#d4d4d4;">upperLidRaiser_upper_mass_clu</div>
<div style="left:28.4px;top:283.66px;width:3px;height:0.6px;background:#6a6a6a;"></div>
<div style="left:30.8px;top:281.76000000000005px;width:4.4px;height:4.4px;border:0.6px solid #888;border-radius:50%;background:#2b2b2b"></div>
<div style="left:37.5px;top:281.46000000000004px;width:5.5px;height:5px;background:#d0d0d0;clip-path:polygon(25% 0,100% 0,75% 100%,0 100%)"></div>
<div style="left:39px;top:282.66px;width:2.5px;height:2.6px;background:#a02848;"></div>
<div class="t" style="left:45.8px;top:282.26px;font-size:4.5px;color:#6f6f6f;">lidTightener_grp</div>
<div style="left:32.8px;top:291.27px;width:5.8px;height:0.6px;background:#8a8a8a;"></div>
<div style="left:37.8px;top:290.46999999999997px;width:1.6px;height:2.2px;background:#bbb;clip-path:polygon(0 0,100% 50%,0 100%)"></div>
<div style="left:41.6px;top:288.77px;width:5.6px;height:5.6px;border:0.5px solid #b8b8b8;border-radius:50%"></div>
<div style="left:44.2px;top:288.96999999999997px;width:0.45px;height:5.2px;background:#b8b8b8;"></div>
<div style="left:41.8px;top:291.34999999999997px;width:5.2px;height:0.45px;background:#b8b8b8;"></div>
<div class="t" style="left:49.3px;top:289.87px;font-size:4.5px;color:#d4d4d4;">lidTightener_inner_lower_lid</div>
<div style="left:32.8px;top:298.88px;width:5.8px;height:0.6px;background:#8a8a8a;"></div>
<div style="left:37.8px;top:298.08px;width:1.6px;height:2.2px;background:#bbb;clip-path:polygon(0 0,100% 50%,0 100%)"></div>
<div style="left:41.6px;top:296.38px;width:5.6px;height:5.6px;border:0.5px solid #b8b8b8;border-radius:50%"></div>
<div style="left:44.2px;top:296.58px;width:0.45px;height:5.2px;background:#b8b8b8;"></div>
<div style="left:41.8px;top:298.96px;width:5.2px;height:0.45px;background:#b8b8b8;"></div>
<div class="t" style="left:49.3px;top:297.48px;font-size:4.5px;color:#d4d4d4;">lidTightener_outer_lower_lid</div>
<div style="left:32.8px;top:306.48999999999995px;width:5.8px;height:0.6px;background:#8a8a8a;"></div>
<div style="left:37.8px;top:305.68999999999994px;width:1.6px;height:2.2px;background:#bbb;clip-path:polygon(0 0,100% 50%,0 100%)"></div>
<div style="left:41.6px;top:303.98999999999995px;width:5.6px;height:5.6px;border:0.5px solid #b8b8b8;border-radius:50%"></div>
<div style="left:44.2px;top:304.18999999999994px;width:0.45px;height:5.2px;background:#b8b8b8;"></div>
<div style="left:41.8px;top:306.56999999999994px;width:5.2px;height:0.45px;background:#b8b8b8;"></div>
<div class="t" style="left:49.3px;top:305.09px;font-size:4.5px;color:#d4d4d4;">lidTightener_upper_lid</div>
<div style="left:32.8px;top:314.09999999999997px;width:5.8px;height:0.6px;background:#8a8a8a;"></div>
<div style="left:37.8px;top:313.29999999999995px;width:1.6px;height:2.2px;background:#bbb;clip-path:polygon(0 0,100% 50%,0 100%)"></div>
<div style="left:41.6px;top:311.59999999999997px;width:5.6px;height:5.6px;border:0.5px solid #b8b8b8;border-radius:50%"></div>
<div style="left:44.2px;top:311.79999999999995px;width:0.45px;height:5.2px;background:#b8b8b8;"></div>
<div style="left:41.8px;top:314.17999999999995px;width:5.2px;height:0.45px;background:#b8b8b8;"></div>
<div class="t" style="left:49.3px;top:312.70px;font-size:4.5px;color:#d4d4d4;">lidTightener_inner_lower_mass</div>
<div style="left:32.8px;top:321.71px;width:5.8px;height:0.6px;background:#8a8a8a;"></div>
<div style="left:37.8px;top:320.90999999999997px;width:1.6px;height:2.2px;background:#bbb;clip-path:polygon(0 0,100% 50%,0 100%)"></div>
<div style="left:41.6px;top:319.21px;width:5.6px;height:5.6px;border:0.5px solid #b8b8b8;border-radius:50%"></div>
<div style="left:44.2px;top:319.40999999999997px;width:0.45px;height:5.2px;background:#b8b8b8;"></div>
<div style="left:41.8px;top:321.78999999999996px;width:5.2px;height:0.45px;background:#b8b8b8;"></div>
<div class="t" style="left:49.3px;top:320.31px;font-size:4.5px;color:#d4d4d4;">lidTightener_outer_lower_mass</div>
<div style="left:32.8px;top:329.32px;width:5.8px;height:0.6px;background:#8a8a8a;"></div>
<div style="left:37.8px;top:328.52px;width:1.6px;height:2.2px;background:#bbb;clip-path:polygon(0 0,100% 50%,0 100%)"></div>
<div style="left:41.6px;top:326.82px;width:5.6px;height:5.6px;border:0.5px solid #b8b8b8;border-radius:50%"></div>
<div style="left:44.2px;top:327.02px;width:0.45px;height:5.2px;background:#b8b8b8;"></div>
<div style="left:41.8px;top:329.4px;width:5.2px;height:0.45px;background:#b8b8b8;"></div>
<div class="t" style="left:49.3px;top:327.92px;font-size:4.5px;color:#d4d4d4;">lidTightener_inner_upper_mass</div>
<div style="left:32.8px;top:336.93px;width:5.8px;height:0.6px;background:#8a8a8a;"></div>
<div style="left:37.8px;top:336.13px;width:1.6px;height:2.2px;background:#bbb;clip-path:polygon(0 0,100% 50%,0 100%)"></div>
<div style="left:41.6px;top:334.43px;width:5.6px;height:5.6px;border:0.5px solid #b8b8b8;border-radius:50%"></div>
<div style="left:44.2px;top:334.63px;width:0.45px;height:5.2px;background:#b8b8b8;"></div>
<div style="left:41.8px;top:337.01px;width:5.2px;height:0.45px;background:#b8b8b8;"></div>
<div class="t" style="left:49.3px;top:335.53px;font-size:4.5px;color:#d4d4d4;">lidTightener_outer_upper_mass</div>
<div style="left:32.8px;top:344.54px;width:5.8px;height:0.6px;background:#8a8a8a;"></div>
<div style="left:37.8px;top:343.74px;width:1.6px;height:2.2px;background:#bbb;clip-path:polygon(0 0,100% 50%,0 100%)"></div>
<div style="left:41.6px;top:342.04px;width:5.6px;height:5.6px;border:0.5px solid #b8b8b8;border-radius:50%"></div>
<div style="left:44.2px;top:342.24px;width:0.45px;height:5.2px;background:#b8b8b8;"></div>
<div style="left:41.8px;top:344.62px;width:5.2px;height:0.45px;background:#b8b8b8;"></div>
<div class="t" style="left:49.3px;top:343.14px;font-size:4.5px;color:#d4d4d4;">lidTightener_outer_corner</div>
<div style="left:32.8px;top:352.15000000000003px;width:5.8px;height:0.6px;background:#8a8a8a;"></div>
<div style="left:37.8px;top:351.35px;width:1.6px;height:2.2px;background:#bbb;clip-path:polygon(0 0,100% 50%,0 100%)"></div>
<div style="left:41.6px;top:349.65000000000003px;width:5.6px;height:5.6px;border:0.5px solid #b8b8b8;border-radius:50%"></div>
<div style="left:44.2px;top:349.85px;width:0.45px;height:5.2px;background:#b8b8b8;"></div>
<div style="left:41.8px;top:352.23px;width:5.2px;height:0.45px;background:#b8b8b8;"></div>
<div class="t" style="left:49.3px;top:350.75px;font-size:4.5px;color:#d4d4d4;">lidTightener_cheekbone_correct</div>
<div style="left:28.4px;top:359.76000000000005px;width:3px;height:0.6px;background:#6a6a6a;"></div>
<div style="left:30.8px;top:357.86000000000007px;width:4.4px;height:4.4px;border:0.6px solid #888;border-radius:50%;background:#2b2b2b"></div>
<div style="left:37.5px;top:357.56000000000006px;width:5.5px;height:5px;background:#d0d0d0;clip-path:polygon(25% 0,100% 0,75% 100%,0 100%)"></div>
<div style="left:39px;top:358.76000000000005px;width:2.5px;height:2.6px;background:#a02848;"></div>
<div class="t" style="left:45.8px;top:358.36px;font-size:4.5px;color:#dcdcdc;">eyesClosed_grp</div>
</div>
<div style="left:19px;top:362px;width:94px;height:5px;background:#333;"></div>
<div style="left:24px;top:362.6px;width:76px;height:3.6px;background:#555;border-radius:2px"></div>
<div class="t" style="left:19.5px;top:362.00px;font-size:4.5px;color:#bbb;">◂</div>
<div class="t" style="left:108px;top:362.00px;font-size:4.5px;color:#bbb;">▸</div>
<div class="t" style="left:113px;top:356.50px;font-size:4.5px;color:#bbb;">▾</div>
<div style="left:118.5px;top:57.5px;width:1px;height:313px;background:#2b2b2b;"></div>
<div style="left:119px;top:57.5px;width:505.5px;height:313px;background:#444;"></div>
<div style="left:119.5px;top:57.5px;width:505px;height:311.5px;border:0.8px solid #6a6a6a"></div>
<div class="t" style="left:124px;top:60.60px;font-size:4.6px;color:#c8c8c8;">View</div>
<div class="t" style="left:139px;top:60.60px;font-size:4.6px;color:#c8c8c8;">Shading</div>
<div class="t" style="left:161.5px;top:60.60px;font-size:4.6px;color:#c8c8c8;">Lighting</div>
<div class="t" style="left:182.6px;top:60.60px;font-size:4.6px;color:#c8c8c8;">Show</div>
<div class="t" style="left:199.8px;top:60.60px;font-size:4.6px;color:#c8c8c8;">Renderer</div>
<div class="t" style="left:223px;top:60.60px;font-size:4.6px;color:#c8c8c8;">Panels</div>
<div style="left:122px;top:66px;width:0.8px;height:6px;background:#5a5a5a;"></div>
<div style="left:124.9px;top:66.6px;width:5px;height:4.8px;background:#cfcfcf;opacity:.8"></div>
<div style="left:131.9px;top:66.6px;width:5px;height:4.8px;background:#cfcfcf;opacity:.8"></div>
<div style="left:139.0px;top:66.6px;width:5px;height:4.8px;background:#cfcfcf;opacity:.8"></div>
<div style="left:148.8px;top:66.6px;width:1.5px;height:4.8px;background:#ccc;"></div>
<div style="left:155.4px;top:66.4px;width:5.2px;height:5.2px;border:0.7px solid #cfcfcf;border-radius:50%;opacity:.85"></div>
<div style="left:162.4px;top:66.4px;width:5.2px;height:5.2px;border:0.7px solid #cfcfcf;border-radius:50%;opacity:.85"></div>
<div style="left:169.0px;top:66.4px;width:5.2px;height:5.2px;border:0.7px solid #cfcfcf;border-radius:50%;opacity:.85"></div>
<div style="left:177px;top:66px;width:0.8px;height:6px;background:#5a5a5a;"></div>
<div style="left:179.5px;top:65.3px;width:8px;height:7.2px;background:#6a9ac0;opacity:.8"></div>
<div style="left:187.9px;top:66.6px;width:5.2px;height:4.8px;border:0.7px solid #cfcfcf;opacity:.85"></div>
<div style="left:195.9px;top:66.6px;width:5.2px;height:4.8px;border:0.7px solid #cfcfcf;opacity:.85"></div>
<div style="left:202.4px;top:66.6px;width:5.2px;height:4.8px;border:0.7px solid #cfcfcf;opacity:.85"></div>
<div style="left:208.4px;top:66.6px;width:5.2px;height:4.8px;border:0.7px solid #cfcfcf;opacity:.85"></div>
<div style="left:216.4px;top:66.6px;width:5.2px;height:4.8px;border:0.7px solid #cfcfcf;opacity:.85"></div>
<div style="left:223.4px;top:66.6px;width:5.2px;height:4.8px;border:0.7px solid #cfcfcf;opacity:.85"></div>
<div style="left:232px;top:66px;width:0.8px;height:6px;background:#5a5a5a;"></div>
<div style="left:235.20000000000002px;top:66.4px;width:5.2px;height:5.2px;border:0.7px solid #cfcfcf;border-radius:50%;opacity:.85"></div>
<div style="left:241.5px;top:65.3px;width:7.5px;height:7.2px;background:#2a9ab8;opacity:.85"></div>
<div style="left:249.4px;top:66.4px;width:5.2px;height:5.2px;background:#cfcfcf;opacity:.8;border-radius:50%"></div>
<div style="left:256.4px;top:66.4px;width:5.2px;height:5.2px;border:0.7px solid #cfcfcf;border-radius:50%;opacity:.85"></div>
<div style="left:262.5px;top:65.3px;width:7.5px;height:7.2px;background:#6a9ac0;opacity:.7"></div>
<div style="left:272.5px;top:66.5px;width:2.5px;height:5px;background:#ddd;opacity:.8"></div>
<div style="left:278px;top:66.8px;width:5px;height:4.6px;background:#555;"></div>
<div style="left:287px;top:66px;width:0.8px;height:6px;background:#5a5a5a;"></div>
<div style="left:290.79999999999995px;top:66.4px;width:5.2px;height:5.2px;background:#cfcfcf;opacity:.8;border-radius:50%"></div>
<div style="left:297.9px;top:66.4px;width:5.2px;height:5.2px;background:#cfcfcf;opacity:.8;border-radius:50%"></div>
<div style="left:303.8px;top:65.3px;width:7px;height:7.2px;background:#6a9ac0;opacity:.7"></div>
<div style="left:314px;top:66.8px;width:4.5px;height:4.6px;background:#555;"></div>
<div style="left:320px;top:66.6px;width:1px;height:5px;background:#ccc;"></div>
<div style="left:325.5px;top:67.5px;width:3px;height:4px;background:#ccc;opacity:.8"></div>
<div style="left:331.6px;top:66px;width:0.8px;height:6px;background:#5a5a5a;"></div>
<div style="left:333.9px;top:66.6px;width:5px;height:4.8px;background:#cfcfcf;opacity:.8"></div>
<div style="left:341.1px;top:66.6px;width:5px;height:4.8px;background:#cfcfcf;opacity:.8"></div>
<div style="left:348.09999999999997px;top:66.4px;width:5.2px;height:5.2px;border:0.7px solid #cfcfcf;border-radius:50%;opacity:.85"></div>
<div style="left:356.7px;top:66px;width:0.8px;height:6px;background:#5a5a5a;"></div>
<div style="left:360.2px;top:66.4px;width:5.2px;height:5.2px;border:1px solid #ccc;border-radius:50%"></div>
<div style="left:368.7px;top:66px;width:13.5px;height:6.5px;background:#2b2b2b;"></div>
<div class="t" style="left:370.5px;top:67.20px;font-size:4.6px;color:#ccc;">0.00</div>
<div style="left:385px;top:67px;width:3px;height:5px;background:#ccc;opacity:.7"></div>
<div style="left:390px;top:66px;width:14.5px;height:6.5px;background:#2b2b2b;"></div>
<div class="t" style="left:392px;top:67.20px;font-size:4.6px;color:#ccc;">1.00</div>
<div style="left:407px;top:65.5px;width:7px;height:7px;background:#3c7fa8;"></div>
<div style="left:414.5px;top:66px;width:62px;height:6.5px;background:#555;"></div>
<div class="t" style="left:417px;top:67.20px;font-size:4.6px;color:#ccc;">sRGB gamma</div>
<div class="t" style="left:471.5px;top:66.50px;font-size:5px;color:#ddd;">▾</div>
<div style="left:120.0px;top:72.5px;width:504.0px;height:296.0px;background:linear-gradient(to bottom,rgb(140,160,182) 0.0%,rgb(136,155,177) 6.2%,rgb(132,151,172) 12.5%,rgb(128,146,166) 18.8%,rgb(123,141,160) 25.0%,rgb(118,135,154) 31.2%,rgb(113,130,148) 37.5%,rgb(108,124,141) 43.8%,rgb(102,117,134) 50.0%,rgb(96,110,126) 56.2%,rgb(90,103,118) 62.5%,rgb(83,95,108) 68.8%,rgb(75,86,98) 75.0%,rgb(66,75,86) 81.2%,rgb(55,63,72) 87.5%,rgb(41,46,53) 93.8%,rgb(18,18,20) 100.0%)"></div>
<div class="t" style="left:125.8px;top:72.72px;font-size:4.5px;color:#e4e9f0;letter-spacing:-0.330px;font-weight:bold">Verts:</div>
<div class="t" style="left:150px;top:72.72px;font-size:4.5px;color:#e4e9f0;letter-spacing:-0.330px;font-weight:bold;width:20px;text-align:right">83921</div>
<div class="t" style="left:192.6px;top:72.72px;font-size:4.5px;color:#e4e9f0;letter-spacing:-0.330px;font-weight:bold">0</div>
<div class="t" style="left:217.5px;top:72.72px;font-size:4.5px;color:#e4e9f0;letter-spacing:-0.330px;font-weight:bold">0</div>
<div class="t" style="left:125.8px;top:80.40px;font-size:4.5px;color:#e4e9f0;letter-spacing:-0.330px;font-weight:bold">Edges:</div>
<div class="t" style="left:150px;top:80.40px;font-size:4.5px;color:#e4e9f0;letter-spacing:-0.330px;font-weight:bold;width:20px;text-align:right">167345</div>
<div class="t" style="left:192.6px;top:80.40px;font-size:4.5px;color:#e4e9f0;letter-spacing:-0.330px;font-weight:bold">0</div>
<div class="t" style="left:217.5px;top:80.40px;font-size:4.5px;color:#e4e9f0;letter-spacing:-0.330px;font-weight:bold">0</div>
<div class="t" style="left:125.8px;top:88.08px;font-size:4.5px;color:#e4e9f0;letter-spacing:-0.330px;font-weight:bold">Faces:</div>
<div class="t" style="left:150px;top:88.08px;font-size:4.5px;color:#e4e9f0;letter-spacing:-0.330px;font-weight:bold;width:20px;text-align:right">83438</div>
<div class="t" style="left:192.6px;top:88.08px;font-size:4.5px;color:#e4e9f0;letter-spacing:-0.330px;font-weight:bold">0</div>
<div class="t" style="left:217.5px;top:88.08px;font-size:4.5px;color:#e4e9f0;letter-spacing:-0.330px;font-weight:bold">0</div>
<div class="t" style="left:125.8px;top:95.77px;font-size:4.5px;color:#e4e9f0;letter-spacing:-0.330px;font-weight:bold">Tris:</div>
<div class="t" style="left:150px;top:95.77px;font-size:4.5px;color:#e4e9f0;letter-spacing:-0.330px;font-weight:bold;width:20px;text-align:right">166876</div>
<div class="t" style="left:192.6px;top:95.77px;font-size:4.5px;color:#e4e9f0;letter-spacing:-0.330px;font-weight:bold">0</div>
<div class="t" style="left:217.5px;top:95.77px;font-size:4.5px;color:#e4e9f0;letter-spacing:-0.330px;font-weight:bold">0</div>
<div class="t" style="left:125.8px;top:103.44px;font-size:4.5px;color:#e4e9f0;letter-spacing:-0.330px;font-weight:bold">UVs:</div>
<div class="t" style="left:150px;top:103.44px;font-size:4.5px;color:#e4e9f0;letter-spacing:-0.330px;font-weight:bold;width:20px;text-align:right">85554</div>
<div class="t" style="left:192.6px;top:103.44px;font-size:4.5px;color:#e4e9f0;letter-spacing:-0.330px;font-weight:bold">0</div>
<div class="t" style="left:217.5px;top:103.44px;font-size:4.5px;color:#e4e9f0;letter-spacing:-0.330px;font-weight:bold">0</div>
<div class="t" style="left:125.8px;top:111.12px;font-size:4.5px;color:#e4e9f0;letter-spacing:-0.330px;font-weight:bold">XGen Splines:</div>
<div class="t" style="left:187px;top:111.12px;font-size:4.5px;color:#e4e9f0;letter-spacing:-0.330px;font-weight:bold">0</div>
<div class="t" style="left:211.5px;top:111.12px;font-size:4.5px;color:#e4e9f0;letter-spacing:-0.330px;font-weight:bold">0</div>
<div class="t" style="left:125.8px;top:118.80px;font-size:4.5px;color:#e4e9f0;letter-spacing:-0.330px;font-weight:bold">GPU Memory:</div>
<div class="t" style="left:169px;top:118.80px;font-size:4.5px;color:#e4e9f0;letter-spacing:-0.330px;font-weight:bold;width:20px;text-align:right">11 264</div>
<div class="t" style="left:203px;top:118.80px;font-size:4.5px;color:#e4e9f0;letter-spacing:-0.330px;font-weight:bold;width:10.5px;text-align:right">397</div>
<div class="t" style="left:218px;top:118.80px;font-size:4.5px;color:#e4e9f0;letter-spacing:-0.330px;font-weight:bold;width:20.7px;text-align:right">7 596</div>
<div style="left:126px;top:351px;width:0.9px;height:6px;background:#3c3;"></div>
<div style="left:126px;top:357px;width:5px;height:0.9px;background:#d33;transform:rotate(-30deg);transform-origin:0 0"></div>
<div style="left:124px;top:358px;width:3px;height:0.9px;background:#33d;"></div>
<svg width="732" height="412" viewBox="0 0 732 412" style="left:0;top:0"><defs><clipPath id="vp"><rect x="120" y="72.5" width="504" height="296"/></clipPath><filter id="b1" x="-60%" y="-60%" width="220%" height="220%"><feGaussianBlur stdDeviation="0.6"/></filter><filter id="b2" x="-60%" y="-60%" width="220%" height="220%"><feGaussianBlur stdDeviation="1.2"/></filter><filter id="b3" x="-60%" y="-60%" width="220%" height="220%"><feGaussianBlur stdDeviation="2"/></filter><filter id="b5" x="-60%" y="-60%" width="220%" height="220%"><feGaussianBlur stdDeviation="3.5"/></filter><filter id="b8" x="-60%" y="-60%" width="220%" height="220%"><feGaussianBlur stdDeviation="6"/></filter><filter id="b12" x="-60%" y="-60%" width="220%" height="220%"><feGaussianBlur stdDeviation="10"/></filter><clipPath id="headclip"><path d="M455.0 60.0 C456.4 62.1 459.3 67.6 463.3 72.5 C467.3 77.4 474.3 84.0 478.8 89.4 C483.3 94.8 487.4 99.8 490.5 105.0 C493.6 110.2 495.4 115.3 497.3 120.5 C499.2 125.7 500.9 130.8 502.0 136.0 C503.1 141.2 503.6 145.5 504.0 152.0 C504.4 158.5 504.6 167.8 504.5 175.0 C504.4 182.2 504.1 188.3 503.5 195.0 C502.9 201.7 501.9 205.8 501.0 215.0 C500.1 224.2 499.3 236.7 498.0 250.0 C496.7 263.3 494.5 283.0 493.0 295.0 C491.5 307.0 490.2 313.7 489.0 322.0 C487.8 330.3 487.0 336.2 486.0 345.0 C485.0 353.8 483.5 370.0 483.0 375.0 L265.5 375.0 C265.1 370.8 264.1 357.4 263.2 350.0 C262.3 342.6 261.2 337.2 260.2 330.8 C259.2 324.4 258.3 317.9 257.3 311.4 C256.3 304.9 255.4 298.4 254.4 292.0 C253.4 285.6 252.3 279.4 251.5 273.0 C250.7 266.6 249.8 260.2 249.6 253.8 C249.4 247.4 250.2 240.9 250.5 234.4 C250.8 227.9 251.3 221.0 251.5 215.0 C251.7 209.0 251.2 204.3 251.5 198.3 C251.8 192.3 252.4 185.3 253.4 178.8 C254.4 172.3 256.2 165.5 257.3 159.4 C258.4 153.3 258.4 148.7 259.8 142.0 C261.2 135.3 263.6 125.8 265.5 119.4 C267.4 113.0 268.8 109.6 271.4 103.8 C274.0 98.0 277.6 89.6 281.0 84.4 C284.4 79.2 288.0 76.4 291.7 72.5 C295.4 68.6 301.1 62.9 303.0 61.0 Z"/></clipPath><clipPath id="earclip"><path d="M499.0 214.5 C501.9 211.6 506.8 212.7 510.3 212.6 C513.8 212.5 517.7 213.0 520.0 213.8 C522.3 214.6 523.5 215.8 523.9 217.3 C524.3 218.8 523.4 220.0 522.5 223.0 C521.6 226.0 519.9 230.0 518.8 235.3 C517.6 240.6 516.4 249.3 515.6 255.0 C514.8 260.7 514.9 263.8 513.8 269.4 C512.7 275.0 510.5 282.4 509.0 288.8 C507.5 295.2 506.5 303.0 505.0 308.0 C503.5 313.0 502.0 316.7 500.2 318.8 C498.4 320.9 496.3 321.4 494.4 320.9 C492.5 320.4 489.4 321.3 488.8 316.0 C488.2 310.7 490.1 296.7 490.5 289.0 C490.9 281.3 490.8 276.5 491.0 270.0 C491.2 263.5 491.2 256.7 491.5 250.0 C491.8 243.3 491.8 235.9 493.0 230.0 C494.2 224.1 496.1 217.4 499.0 214.5 Z"/></clipPath><radialGradient id="noseg" cx="0.6" cy="0.65" r="0.7" fx="0.6" fy="0.62"><stop offset="0" stop-color="#d2d2d2"/><stop offset="0.35" stop-color="#c4c4c4"/><stop offset="0.7" stop-color="#a8a8a8"/><stop offset="1" stop-color="#909090"/></radialGradient></defs><g clip-path="url(#vp)"><path d="M455.0 60.0 C456.4 62.1 459.3 67.6 463.3 72.5 C467.3 77.4 474.3 84.0 478.8 89.4 C483.3 94.8 487.4 99.8 490.5 105.0 C493.6 110.2 495.4 115.3 497.3 120.5 C499.2 125.7 500.9 130.8 502.0 136.0 C503.1 141.2 503.6 145.5 504.0 152.0 C504.4 158.5 504.6 167.8 504.5 175.0 C504.4 182.2 504.1 188.3 503.5 195.0 C502.9 201.7 501.9 205.8 501.0 215.0 C500.1 224.2 499.3 236.7 498.0 250.0 C496.7 263.3 494.5 283.0 493.0 295.0 C491.5 307.0 490.2 313.7 489.0 322.0 C487.8 330.3 487.0 336.2 486.0 345.0 C485.0 353.8 483.5 370.0 483.0 375.0 L265.5 375.0 C265.1 370.8 264.1 357.4 263.2 350.0 C262.3 342.6 261.2 337.2 260.2 330.8 C259.2 324.4 258.3 317.9 257.3 311.4 C256.3 304.9 255.4 298.4 254.4 292.0 C253.4 285.6 252.3 279.4 251.5 273.0 C250.7 266.6 249.8 260.2 249.6 253.8 C249.4 247.4 250.2 240.9 250.5 234.4 C250.8 227.9 251.3 221.0 251.5 215.0 C251.7 209.0 251.2 204.3 251.5 198.3 C251.8 192.3 252.4 185.3 253.4 178.8 C254.4 172.3 256.2 165.5 257.3 159.4 C258.4 153.3 258.4 148.7 259.8 142.0 C261.2 135.3 263.6 125.8 265.5 119.4 C267.4 113.0 268.8 109.6 271.4 103.8 C274.0 98.0 277.6 89.6 281.0 84.4 C284.4 79.2 288.0 76.4 291.7 72.5 C295.4 68.6 301.1 62.9 303.0 61.0 Z" fill="#b6b6b6"/><g clip-path="url(#headclip)"><g filter="url(#b12)"><ellipse cx="252" cy="300" rx="12" ry="75" fill="#909090"/><ellipse cx="270" cy="235" rx="8" ry="25" fill="#a4a4a4"/><ellipse cx="270" cy="300" rx="8" ry="40" fill="#bcbcbc"/><ellipse cx="290" cy="95" rx="12" ry="25" fill="#a8a8a8"/><ellipse cx="485" cy="140" rx="16" ry="60" fill="#a2a2a2"/><path d="M452 215 Q468 280 462 375 L505 375 L505 215 Z" fill="#959595"/><ellipse cx="486" cy="335" rx="12" ry="45" fill="#7e7e7e"/><ellipse cx="360" cy="150" rx="50" ry="25" fill="#c2c2c2"/><ellipse cx="410" cy="275" rx="28" ry="50" fill="#c4c4c4"/><ellipse cx="340" cy="240" rx="20" ry="40" fill="#c0c0c0"/></g><g filter="url(#b8)"><ellipse cx="470" cy="140" rx="40" ry="70" fill="#a6a6a6"/><ellipse cx="420" cy="95" rx="40" ry="25" fill="#acacac"/></g><g filter="url(#b3)"><path d="M312.0 151.1 A100 128 0 0 1 452.0 206.2" stroke="#a2a2a2" stroke-width="2.2" fill="none" opacity="0.65"/><path d="M308.0 140.8 A108 140 0 0 1 459.2 201.0" stroke="#c2c2c2" stroke-width="3.5" fill="none" opacity="0.65"/><path d="M309.8 126.3 A116 152 0 0 1 466.4 195.7" stroke="#9c9c9c" stroke-width="2.2" fill="none" opacity="0.65"/><path d="M312.4 111.7 A124 164 0 0 1 473.6 190.5" stroke="#c0c0c0" stroke-width="3.5" fill="none" opacity="0.65"/><path d="M315.4 97.1 A133 176 0 0 1 481.7 185.3" stroke="#a0a0a0" stroke-width="2.2" fill="none" opacity="0.65"/><path d="M319.4 82.7 A142 188 0 0 1 489.8 180.1" stroke="#bebebe" stroke-width="3" fill="none" opacity="0.65"/><path d="M324.5 68.4 A150 200 0 0 1 497.0 174.8" stroke="#a4a4a4" stroke-width="2" fill="none" opacity="0.65"/><path d="M300 158 Q330 146 365 152" stroke="#c4c4c4" stroke-width="5" fill="none"/></g><g filter="url(#b5)"><ellipse cx="290" cy="196" rx="22" ry="11" fill="#a8a8a8"/><path d="M345 174 Q390 164 425 178 L425 186 Q390 176 348 184 Z" fill="#989898"/><ellipse cx="392" cy="197" rx="30" ry="13" fill="#b0b0b0"/><ellipse cx="286" cy="232" rx="20" ry="8" fill="#a8a8a8"/><ellipse cx="395" cy="236" rx="26" ry="9" fill="#a8a8a8"/><ellipse cx="327" cy="190" rx="7" ry="16" fill="#cdcdcd"/><ellipse cx="262" cy="210" rx="6" ry="18" fill="#a4a4a4"/></g><g filter="url(#b2)"><path d="M271 176.5 Q283 175 295 177 Q306 180 311 188 Q303 184 292 180.5 Q281 178.5 272 179 Z" fill="#2a2a2a"/></g><path d="M270 183 Q290 180 312 192 L312 205 Q290 192 270 200 Z" fill="#a4a4a4" filter="url(#b3)"/><path d="M273 197 Q285 191 299 193 Q306 196 309 202" stroke="#c0c0c0" stroke-width="2.5" fill="none" filter="url(#b2)"/><path d="M357 209 Q372 188 392 187 Q412 188 418 204" stroke="#808080" stroke-width="0.9" fill="none" filter="url(#b1)"/><path d="M362 209 Q376 193 394 192 Q410 193 415 206" stroke="#d0d0d0" stroke-width="3.2" fill="none" filter="url(#b2)"/><path d="M269 207 Q280 199 292 200 Q303 202 307 210 Q296 217 282 217 Q274 215 269 207 Z" fill="#d6d6d6"/><circle cx="282.6" cy="208.3" r="7.6" fill="#6a6064"/><circle cx="282.6" cy="208.3" r="5.6" fill="#85797b"/><circle cx="283" cy="208.5" r="2.4" fill="#1a1a1a"/><path d="M268 207 Q279 198 293 199 Q304 201 309 211" stroke="#3a3a3a" stroke-width="1.4" fill="none"/><path d="M271 214 Q288 220 307 212" stroke="#9a9a9a" stroke-width="0.8" fill="none"/><path d="M269 192 Q284 185 299 186.6 Q307 189 310 196" stroke="#6a6a6a" stroke-width="0.7" fill="none" filter="url(#b1)"/><g filter="url(#b2)"><path d="M360 214 Q375 232 400 238 Q418 236 428 226" stroke="#8a8a8a" stroke-width="2" fill="none"/><path d="M368 224 Q385 240 410 244" stroke="#a0a0a0" stroke-width="1.5" fill="none"/><path d="M352 205 Q358 212 362 222" stroke="#7a7a7a" stroke-width="2" fill="none"/><path d="M420 218 Q432 222 440 230" stroke="#9a9a9a" stroke-width="1.5" fill="none"/></g><path d="M373 210 Q382 201 394 200 Q408 201 416 212 Q404 219 390 219 Q380 217 373 210 Z" fill="#cfcfcf"/><circle cx="391.7" cy="210" r="8.8" fill="#3e322b"/><circle cx="391.7" cy="210" r="6.2" fill="#5e4e40"/><circle cx="391.7" cy="210" r="2.8" fill="#151515"/><path d="M372 211 Q382 200 396 199.5 Q410 201 417 212" stroke="#3a3a3a" stroke-width="1.3" fill="none"/><path d="M374 215 Q392 222 416 214" stroke="#9a9a9a" stroke-width="0.8" fill="none"/><g filter="url(#b5)"><ellipse cx="284" cy="326" rx="10" ry="16" fill="#a6a6a6"/><ellipse cx="325" cy="330" rx="16" ry="14" fill="#cacaca"/><path d="M362 300 Q374 328 384 355" stroke="#9e9e9e" stroke-width="6" fill="none"/><path d="M340 300 Q350 302 360 305" stroke="#8a8a8a" stroke-width="5" fill="none"/><ellipse cx="330" cy="353" rx="45" ry="3" fill="#9a9a9a"/><ellipse cx="325" cy="363" rx="40" ry="4" fill="#cacaca"/><ellipse cx="318" cy="336" rx="9" ry="13" fill="#d0d0d0"/></g><path d="M308.3 200.0 C303.1 204.3 303.1 218.4 300.5 226.0 C297.9 233.6 295.3 238.4 292.7 245.5 C290.1 252.6 286.4 262.3 285.0 268.8 C283.6 275.3 283.6 279.9 284.2 284.4 C284.8 288.9 286.2 292.4 288.9 296.0 C291.6 299.6 296.0 303.4 300.5 305.7 C305.0 308.0 312.4 309.6 316.0 309.6 C319.6 309.6 318.8 307.6 322.0 305.7 C325.2 303.8 330.7 299.6 335.5 298.0 C340.3 296.4 347.2 297.0 351.0 296.0 C354.8 295.0 356.7 295.2 358.0 292.0 C359.3 288.8 359.6 281.8 358.8 276.6 C358.0 271.4 355.6 266.8 353.0 261.0 C350.4 255.2 345.9 248.7 343.0 241.6 C340.1 234.5 337.4 225.2 335.5 218.3 C333.6 211.4 336.1 203.1 331.6 200.0 C327.1 196.9 313.5 195.7 308.3 200.0 Z" fill="url(#noseg)" filter="url(#b3)"/><g filter="url(#b3)"><ellipse cx="321" cy="279" rx="13" ry="14" fill="#d2d2d2" opacity="0.8"/><path d="M289 262 Q284 285 296 302" stroke="#7e7e7e" stroke-width="5" fill="none" opacity="0.8"/><path d="M350 262 Q357 276 355 292" stroke="#9a9a9a" stroke-width="5" fill="none" opacity="0.8"/><path d="M313 212 Q306 232 302 250" stroke="#b2b2b2" stroke-width="5" fill="none"/><path d="M330 214 Q338 235 345 258" stroke="#c4c4c4" stroke-width="4" fill="none"/><ellipse cx="270" cy="255" rx="9" ry="30" fill="#bcbcbc"/></g><g filter="url(#b2)"><path d="M300.5 226 C296 236 294 242 292.7 245.5 C289 255 286 262 285 268.8 C284 276 284 280 284.2 284.4 C285 290 286 293 288.9 296" stroke="#5a5a5a" stroke-width="1.4" fill="none"/><path d="M288.9 296 C292 300 296 304 300.5 305.7 C306 308 311 310 316 309.6 C319 309 321 307 322 305.7 C327 302 331 299 335.5 298 C341 297 347 297 351 296 C354 295 357 294 358 292" stroke="#3a3a3a" stroke-width="2.2" fill="none"/><ellipse cx="318" cy="307.5" rx="6" ry="2.5" fill="#222"/><ellipse cx="351" cy="298.5" rx="5" ry="2.6" fill="#333"/><path d="M358.5 290 C359 284 358 280 356 272 C354 266 351 262 348 256" stroke="#707070" stroke-width="1.3" fill="none"/><path d="M284 355 Q300 353 318 356.4 Q345 353 372 355" stroke="#606060" stroke-width="1.3" fill="none"/></g></g><path d="M499.0 214.5 C501.9 211.6 506.8 212.7 510.3 212.6 C513.8 212.5 517.7 213.0 520.0 213.8 C522.3 214.6 523.5 215.8 523.9 217.3 C524.3 218.8 523.4 220.0 522.5 223.0 C521.6 226.0 519.9 230.0 518.8 235.3 C517.6 240.6 516.4 249.3 515.6 255.0 C514.8 260.7 514.9 263.8 513.8 269.4 C512.7 275.0 510.5 282.4 509.0 288.8 C507.5 295.2 506.5 303.0 505.0 308.0 C503.5 313.0 502.0 316.7 500.2 318.8 C498.4 320.9 496.3 321.4 494.4 320.9 C492.5 320.4 489.4 321.3 488.8 316.0 C488.2 310.7 490.1 296.7 490.5 289.0 C490.9 281.3 490.8 276.5 491.0 270.0 C491.2 263.5 491.2 256.7 491.5 250.0 C491.8 243.3 491.8 235.9 493.0 230.0 C494.2 224.1 496.1 217.4 499.0 214.5 Z" fill="#bcbcbc"/><g clip-path="url(#earclip)"><ellipse cx="500" cy="258" rx="9" ry="36" fill="#8c8c8c" filter="url(#b5)"/><ellipse cx="495" cy="240" rx="4" ry="12" fill="#6a6a6a" filter="url(#b3)"/><circle cx="493" cy="246" r="2.5" fill="#4a4a4a" filter="url(#b2)"/><path d="M496 219 Q510 212 521 218 Q517 245 512 272 Q507 298 500 318" stroke="#d8d8d8" stroke-width="4.5" fill="none" filter="url(#b2)"/><path d="M497 300 Q496 312 499 318" stroke="#d0d0d0" stroke-width="6" fill="none" filter="url(#b3)"/><path d="M503 236 Q499 262 502 288" stroke="#c6c6c6" stroke-width="3" fill="none" filter="url(#b2)"/><path d="M506 265 Q504 280 502 292" stroke="#5a5a5a" stroke-width="0.8" fill="none" filter="url(#b1)"/><path d="M491 276 Q496 272 499 275" stroke="#5a5a5a" stroke-width="0.9" fill="none" filter="url(#b1)"/><path d="M512 216 Q518 216 521 219" stroke="#3a3a3a" stroke-width="1.1" fill="none" filter="url(#b1)"/></g><line x1="395.5" y1="210" x2="395.5" y2="176" stroke="#3cd03c" stroke-width="0.9"/><path d="M393 177.5 L398 177.5 L395.5 169.5 Z" fill="#3cd03c"/><line x1="403" y1="210.8" x2="428" y2="210.8" stroke="#e83030" stroke-width="0.8"/><path d="M427 208.3 L427 213.3 L437 210.8 Z" fill="#e83030"/><circle cx="386.3" cy="207.5" r="1.7" fill="#2020e0"/><rect x="390.7" y="206.5" width="8.8" height="8.8" fill="none" stroke="#d8c040" stroke-width="0.8"/><rect x="417" y="181.3" width="6.7" height="6.8" fill="#8a8ae0" opacity="0.8" stroke="#6a6ad0" stroke-width="0.5"/><line x1="389.4" y1="178.4" x2="389.4" y2="185.2" stroke="#e07070" stroke-width="0.8" opacity="0.7"/><path d="M388.7 193 H392.7 M390.7 191 V195" stroke="#333" stroke-width="0.6"/><path d="M389.7 223 H393.7 M391.7 221 V225" stroke="#333" stroke-width="0.6"/><path d="M418.7 217.3 H422.7 M420.7 215.3 V219.3" stroke="#333" stroke-width="0.6"/><rect x="410.5" y="231" width="3.5" height="3.5" fill="#777" stroke="#444" stroke-width="0.5"/><path d="M412.5 233 L412.5 239 L414 237.5 L415.5 240 L416.3 239.5 L415 237 L417 236.5 Z" fill="#eee" stroke="#333" stroke-width="0.3"/><text x="388.8" y="325" font-size="4.5" fill="#444" font-family="Liberation Sans">c</text><text x="388.8" y="347" font-size="4.5" fill="#444" font-family="Liberation Sans">c</text></g></svg>
<div class="t" style="left:364px;top:362.05px;font-size:4.5px;color:#eee;letter-spacing:-0.540px;">persp</div>
<div style="left:119px;top:368.5px;width:505.5px;height:2.5px;background:#3a3a3a;"></div>
<div style="left:624.5px;top:57.5px;width:97px;height:313px;background:#444;"></div>
<div style="left:624.5px;top:57.5px;width:1.5px;height:313px;background:#383838;"></div>
<div style="left:703px;top:58.5px;width:5px;height:5px;background:#d0a040;clip-path:polygon(50% 0,100% 100%,0 100%)"></div>
<div style="left:710px;top:58.5px;width:5px;height:5px;border:1.1px solid #2aa0b8;border-radius:50% 50% 0 0"></div>
<div style="left:717px;top:61px;width:5px;height:1px;background:#5a8ad0;transform:rotate(-45deg)"></div>
<div class="t" style="left:630.5px;top:68.10px;font-size:4.6px;color:#c8c8c8;">Channels</div>
<div class="t" style="left:654.6px;top:68.10px;font-size:4.6px;color:#c8c8c8;">Edit</div>
<div class="t" style="left:668px;top:68.10px;font-size:4.6px;color:#c8c8c8;">Object</div>
<div class="t" style="left:686px;top:68.10px;font-size:4.6px;color:#c8c8c8;">Show</div>
<div class="t" style="left:627.8px;top:75.60px;font-size:4.5px;color:#e8e8e8;font-weight:bold">look_down_upper_mass_cluster</div>
<div class="t" style="left:654px;top:81.60px;font-size:4.6px;color:#c0c0c0;width:40px;text-align:right">Translate X</div>
<div style="left:695px;top:81.1px;width:3.2px;height:5.8px;background:#cc6070;"></div>
<div style="left:698.2px;top:81.1px;width:25.4px;height:5.6px;background:#2a2a2a;"></div>
<div class="t" style="left:700.5px;top:81.60px;font-size:4.6px;color:#ddd;">0</div>
<div class="t" style="left:654px;top:87.62px;font-size:4.6px;color:#c0c0c0;width:40px;text-align:right">Translate Y</div>
<div style="left:695px;top:87.11999999999999px;width:3.2px;height:5.8px;background:#cc6070;"></div>
<div style="left:698.2px;top:87.11999999999999px;width:25.4px;height:5.6px;background:#2a2a2a;"></div>
<div class="t" style="left:700.5px;top:87.62px;font-size:4.6px;color:#ddd;">0</div>
<div class="t" style="left:654px;top:93.64px;font-size:4.6px;color:#c0c0c0;width:40px;text-align:right">Translate Z</div>
<div style="left:695px;top:93.13999999999999px;width:3.2px;height:5.8px;background:#cc6070;"></div>
<div style="left:698.2px;top:93.13999999999999px;width:25.4px;height:5.6px;background:#2a2a2a;"></div>
<div class="t" style="left:700.5px;top:93.64px;font-size:4.6px;color:#ddd;">0</div>
<div class="t" style="left:654px;top:99.66px;font-size:4.6px;color:#c0c0c0;width:40px;text-align:right">Rotate X</div>
<div style="left:695px;top:99.16px;width:3.2px;height:5.8px;background:#cc6070;"></div>
<div style="left:698.2px;top:99.16px;width:25.4px;height:5.6px;background:#2a2a2a;"></div>
<div class="t" style="left:700.5px;top:99.66px;font-size:4.6px;color:#ddd;">0</div>
<div class="t" style="left:654px;top:105.68px;font-size:4.6px;color:#c0c0c0;width:40px;text-align:right">Rotate Y</div>
<div style="left:695px;top:105.17999999999999px;width:3.2px;height:5.8px;background:#cc6070;"></div>
<div style="left:698.2px;top:105.17999999999999px;width:25.4px;height:5.6px;background:#2a2a2a;"></div>
<div class="t" style="left:700.5px;top:105.68px;font-size:4.6px;color:#ddd;">0</div>
<div class="t" style="left:654px;top:111.70px;font-size:4.6px;color:#c0c0c0;width:40px;text-align:right">Rotate Z</div>
<div style="left:695px;top:111.19999999999999px;width:3.2px;height:5.8px;background:#cc6070;"></div>
<div style="left:698.2px;top:111.19999999999999px;width:25.4px;height:5.6px;background:#2a2a2a;"></div>
<div class="t" style="left:700.5px;top:111.70px;font-size:4.6px;color:#ddd;">0</div>
<div class="t" style="left:654px;top:117.72px;font-size:4.6px;color:#c0c0c0;width:40px;text-align:right">Scale X</div>
<div style="left:695px;top:117.22px;width:3.2px;height:5.8px;background:#cc6070;"></div>
<div style="left:698.2px;top:117.22px;width:25.4px;height:5.6px;background:#2a2a2a;"></div>
<div class="t" style="left:700.5px;top:117.72px;font-size:4.6px;color:#ddd;">1</div>
<div class="t" style="left:654px;top:123.74px;font-size:4.6px;color:#c0c0c0;width:40px;text-align:right">Scale Y</div>
<div style="left:695px;top:123.24px;width:3.2px;height:5.8px;background:#cc6070;"></div>
<div style="left:698.2px;top:123.24px;width:25.4px;height:5.6px;background:#2a2a2a;"></div>
<div class="t" style="left:700.5px;top:123.74px;font-size:4.6px;color:#ddd;">1</div>
<div class="t" style="left:654px;top:129.76px;font-size:4.6px;color:#c0c0c0;width:40px;text-align:right">Scale Z</div>
<div style="left:695px;top:129.26px;width:3.2px;height:5.8px;background:#cc6070;"></div>
<div style="left:698.2px;top:129.26px;width:25.4px;height:5.6px;background:#2a2a2a;"></div>
<div class="t" style="left:700.5px;top:129.76px;font-size:4.6px;color:#ddd;">1</div>
<div class="t" style="left:654px;top:135.78px;font-size:4.6px;color:#c0c0c0;width:40px;text-align:right">Visibility</div>
<div style="left:698.2px;top:135.28px;width:25.4px;height:5.6px;background:#2a2a2a;"></div>
<div class="t" style="left:700.5px;top:135.78px;font-size:4.6px;color:#ddd;">on</div>
<div class="t" style="left:628px;top:143.00px;font-size:4.5px;color:#ddd;">OUTPUTS</div>
<div style="left:626px;top:146px;width:96px;height:60px;overflow:hidden">
<div class="t" style="left:5px;top:4px;font-size:4.5px;color:#e8e8e8;font-weight:bold">look_down_upper_mass_clusterCluster</div>
<div class="t" style="left:5px;top:10px;font-size:4.5px;color:#e8e8e8;font-weight:bold">look_down_lower_mass_clusterCluster</div>
<div class="t" style="left:5px;top:16px;font-size:4.5px;color:#e8e8e8;font-weight:bold">look_left_upper_mass_clusterCluster</div>
<div class="t" style="left:5px;top:22px;font-size:4.5px;color:#e8e8e8;font-weight:bold">look_up_upper_mass_clusterCluster</div>
<div class="t" style="left:5px;top:28px;font-size:4.5px;color:#e8e8e8;font-weight:bold">look_right_upper_mass_clusterCluster</div>
<div class="t" style="left:5px;top:34px;font-size:4.5px;color:#e8e8e8;font-weight:bold">upperLidRaiser_upper_mass_clusterCl...</div>
<div class="t" style="left:5px;top:40px;font-size:4.5px;color:#e8e8e8;font-weight:bold">lidTightener_cheekbone_correctCluster</div>
<div class="t" style="left:5px;top:46px;font-size:4.5px;color:#e8e8e8;font-weight:bold">close_upper_mass_clusterCluster</div>
<div class="t" style="left:5px;top:52px;font-size:4.5px;color:#e8e8e8;font-weight:bold">close_outer_corner_clusterCluster</div>
</div>
<div style="left:626.7px;top:207.4px;width:97.6px;height:72px;background:#2e2e2e;"></div>
<div style="left:626px;top:279px;width:98px;height:5px;background:#444;"></div>
<div style="left:628.9px;top:284.9px;width:20.5px;height:7.1px;background:#505050;"></div>
<div class="t" style="left:630.8px;top:286.40px;font-size:4.5px;color:#e0e0e0;">Display</div>
<div class="t" style="left:654px;top:286.40px;font-size:4.5px;color:#777;">Anim</div>
<div style="left:626px;top:291.7px;width:98px;height:78px;background:#444;"></div>
<div class="t" style="left:631px;top:293.70px;font-size:4.6px;color:#c8c8c8;">Layers</div>
<div class="t" style="left:649px;top:293.70px;font-size:4.6px;color:#c8c8c8;">Options</div>
<div class="t" style="left:671px;top:293.70px;font-size:4.6px;color:#c8c8c8;">Help</div>
<div style="left:690px;top:301.3px;width:4px;height:4px;background:#cfe;border-radius:1px;opacity:.7"></div>
<div style="left:698px;top:301.3px;width:4px;height:4px;background:#cfe;border-radius:1px;opacity:.7"></div>
<div style="left:707px;top:301.3px;width:4px;height:4px;background:#cfe;border-radius:1px;opacity:.7"></div>
<div style="left:717px;top:301.3px;width:4px;height:4px;background:#cfe;border-radius:1px;opacity:.7"></div>
<div style="left:627.5px;top:307.5px;width:96px;height:56px;background:#2b2b2b;"></div>
<div style="left:627.5px;top:310px;width:96px;height:7px;background:#5285a6;"></div>
<div style="left:630px;top:311px;width:6px;height:5px;border:0.6px solid #cde"></div>
<div class="t" style="left:631.8px;top:311.25px;font-size:4.5px;color:#eee;letter-spacing:-0.420px;">V</div>
<div style="left:639px;top:311px;width:6px;height:5px;border:0.6px solid #cde"></div>
<div class="t" style="left:640.8px;top:311.25px;font-size:4.5px;color:#eee;letter-spacing:-0.420px;">P</div>
<div style="left:648px;top:311px;width:6px;height:5px;border:0.6px solid #8ab"></div>
<div style="left:657px;top:311px;width:5px;height:5px;background:#222;clip-path:polygon(0 0,100% 0,100% 100%)"></div>
<div style="left:657px;top:311px;width:5px;height:5px;background:#ddd;clip-path:polygon(0 0,0 100%,100% 100%)"></div>
<div class="t" style="left:664px;top:311.40px;font-size:4.6px;color:#eee;">cluster_lyr</div>
<div style="left:627.5px;top:364px;width:96px;height:5px;background:#333;"></div>
<div style="left:633px;top:364.6px;width:72px;height:3.8px;background:#5a5a5a;border-radius:2px"></div>
<div class="t" style="left:628px;top:363.80px;font-size:4.5px;color:#bbb;">◂</div>
<div class="t" style="left:719px;top:363.80px;font-size:4.5px;color:#bbb;">▸</div>
<div style="left:723.6px;top:57.5px;width:2px;height:313px;background:#333;"></div>
<div style="left:725.5px;top:57.5px;width:6.5px;height:313px;background:#444;"></div>
<div class="t" style="left:697.6px;top:85.15px;width:60px;height:5px;font-size:4.5px;color:#e8e8e8;text-align:center;transform:rotate(90deg)">Channel Box / Layer Editor</div>
<div class="t" style="left:697.6px;top:135.0px;width:60px;height:5px;font-size:4.5px;color:#888;text-align:center;transform:rotate(90deg)">Modeling Toolkit</div>
<div class="t" style="left:697.6px;top:175.5px;width:60px;height:5px;font-size:4.5px;color:#888;text-align:center;transform:rotate(90deg)">Attribute Editor</div>
<div class="t" style="left:697.6px;top:206.5px;width:60px;height:5px;font-size:4.5px;color:#888;text-align:center;transform:rotate(90deg)">XGen</div>
<div class="t" style="left:697.6px;top:234.5px;width:60px;height:5px;font-size:4.5px;color:#888;text-align:center;transform:rotate(90deg)">Tool Settings</div>
<div style="left:0px;top:370.5px;width:732px;height:41.5px;background:#444;"></div>
<div style="left:5px;top:372px;width:615px;height:11.5px;background:#2f2f2f;"></div>
<div style="left:7.75px;top:377.5px;width:0.7px;height:5.8px;background:#8a8a8a;"></div>
<div class="t" style="left:8.9px;top:372.35px;font-size:4.5px;color:#8a8a8a;letter-spacing:-0.540px;">0</div>
<div style="left:35.29px;top:377.5px;width:0.7px;height:5.8px;background:#8a8a8a;"></div>
<div class="t" style="left:36.44px;top:372.35px;font-size:4.5px;color:#8a8a8a;letter-spacing:-0.540px;">10</div>
<div style="left:62.83px;top:377.5px;width:0.7px;height:5.8px;background:#8a8a8a;"></div>
<div class="t" style="left:63.98px;top:372.35px;font-size:4.5px;color:#8a8a8a;letter-spacing:-0.540px;">20</div>
<div style="left:90.37px;top:377.5px;width:0.7px;height:5.8px;background:#8a8a8a;"></div>
<div class="t" style="left:91.52px;top:372.35px;font-size:4.5px;color:#8a8a8a;letter-spacing:-0.540px;">30</div>
<div style="left:117.91px;top:377.5px;width:0.7px;height:5.8px;background:#8a8a8a;"></div>
<div class="t" style="left:119.05999999999999px;top:372.35px;font-size:4.5px;color:#8a8a8a;letter-spacing:-0.540px;">40</div>
<div style="left:145.45px;top:377.5px;width:0.7px;height:5.8px;background:#8a8a8a;"></div>
<div class="t" style="left:146.6px;top:372.35px;font-size:4.5px;color:#8a8a8a;letter-spacing:-0.540px;">50</div>
<div style="left:172.99px;top:377.5px;width:0.7px;height:5.8px;background:#8a8a8a;"></div>
<div class="t" style="left:174.14000000000001px;top:372.35px;font-size:4.5px;color:#8a8a8a;letter-spacing:-0.540px;">60</div>
<div style="left:200.53px;top:377.5px;width:0.7px;height:5.8px;background:#8a8a8a;"></div>
<div class="t" style="left:201.68px;top:372.35px;font-size:4.5px;color:#8a8a8a;letter-spacing:-0.540px;">70</div>
<div style="left:228.07px;top:377.5px;width:0.7px;height:5.8px;background:#8a8a8a;"></div>
<div class="t" style="left:229.22px;top:372.35px;font-size:4.5px;color:#8a8a8a;letter-spacing:-0.540px;">80</div>
<div style="left:255.61px;top:377.5px;width:0.7px;height:5.8px;background:#8a8a8a;"></div>
<div class="t" style="left:256.76px;top:372.35px;font-size:4.5px;color:#8a8a8a;letter-spacing:-0.540px;">90</div>
<div style="left:283.15px;top:377.5px;width:0.7px;height:5.8px;background:#8a8a8a;"></div>
<div class="t" style="left:284.3px;top:372.35px;font-size:4.5px;color:#8a8a8a;letter-spacing:-0.540px;">100</div>
<div style="left:310.69px;top:377.5px;width:0.7px;height:5.8px;background:#8a8a8a;"></div>
<div class="t" style="left:311.84000000000003px;top:372.35px;font-size:4.5px;color:#8a8a8a;letter-spacing:-0.540px;">110</div>
<div style="left:338.23px;top:377.5px;width:0.7px;height:5.8px;background:#8a8a8a;"></div>
<div class="t" style="left:339.38000000000005px;top:372.35px;font-size:4.5px;color:#8a8a8a;letter-spacing:-0.540px;">120</div>
<div style="left:365.77px;top:377.5px;width:0.7px;height:5.8px;background:#8a8a8a;"></div>
<div class="t" style="left:366.92px;top:372.35px;font-size:4.5px;color:#8a8a8a;letter-spacing:-0.540px;">130</div>
<div style="left:393.31px;top:377.5px;width:0.7px;height:5.8px;background:#8a8a8a;"></div>
<div class="t" style="left:394.46000000000004px;top:372.35px;font-size:4.5px;color:#8a8a8a;letter-spacing:-0.540px;">140</div>
<div style="left:420.85px;top:377.5px;width:0.7px;height:5.8px;background:#8a8a8a;"></div>
<div class="t" style="left:422.00000000000006px;top:372.35px;font-size:4.5px;color:#8a8a8a;letter-spacing:-0.540px;">150</div>
<div style="left:448.39px;top:377.5px;width:0.7px;height:5.8px;background:#8a8a8a;"></div>
<div class="t" style="left:449.54px;top:372.35px;font-size:4.5px;color:#8a8a8a;letter-spacing:-0.540px;">160</div>
<div style="left:475.93px;top:377.5px;width:0.7px;height:5.8px;background:#8a8a8a;"></div>
<div class="t" style="left:477.08000000000004px;top:372.35px;font-size:4.5px;color:#8a8a8a;letter-spacing:-0.540px;">170</div>
<div style="left:503.47px;top:377.5px;width:0.7px;height:5.8px;background:#8a8a8a;"></div>
<div class="t" style="left:504.62000000000006px;top:372.35px;font-size:4.5px;color:#8a8a8a;letter-spacing:-0.540px;">180</div>
<div style="left:531.01px;top:377.5px;width:0.7px;height:5.8px;background:#8a8a8a;"></div>
<div class="t" style="left:532.16px;top:372.35px;font-size:4.5px;color:#8a8a8a;letter-spacing:-0.540px;">190</div>
<div style="left:558.55px;top:377.5px;width:0.7px;height:5.8px;background:#8a8a8a;"></div>
<div class="t" style="left:559.6999999999999px;top:372.35px;font-size:4.5px;color:#8a8a8a;letter-spacing:-0.540px;">200</div>
<div style="left:586.09px;top:377.5px;width:0.7px;height:5.8px;background:#8a8a8a;"></div>
<div class="t" style="left:587.24px;top:372.35px;font-size:4.5px;color:#8a8a8a;letter-spacing:-0.540px;">210</div>
<div style="left:613.63px;top:377.5px;width:0.7px;height:5.8px;background:#8a8a8a;"></div>
<div class="t" style="left:614.78px;top:372.35px;font-size:4.5px;color:#8a8a8a;letter-spacing:-0.540px;">220</div>
<div style="left:172.84px;top:372.5px;width:1px;height:10.8px;background:#a03444;"></div>
<div style="left:200.38px;top:372.5px;width:1px;height:10.8px;background:#a03444;"></div>
<div style="left:227.92px;top:372.5px;width:1px;height:10.8px;background:#a03444;"></div>
<div style="left:530.86px;top:372.5px;width:1px;height:10.8px;background:#a03444;"></div>
<div style="left:558.4px;top:372.5px;width:1px;height:10.8px;background:#a03444;"></div>
<div style="left:585.94px;top:372.5px;width:1px;height:10.8px;background:#a03444;"></div>
<div style="left:614px;top:375px;width:5px;height:8.5px;background:#ccc;opacity:.8"></div>
<div class="t" style="left:613px;top:379.05px;font-size:4.5px;color:#222;letter-spacing:-0.540px;">220</div>
<div style="left:621px;top:372px;width:22px;height:10px;background:#2b2b2b;"></div>
<div class="t" style="left:625px;top:374.20px;font-size:4.6px;color:#ddd;">220</div>
<div style="left:658.5px;top:375.5px;width:5px;height:5px;background:#cfcfcf;opacity:.75;clip-path:polygon(100% 0,0 50%,100% 100%)"></div>
<div style="left:667.5px;top:375.5px;width:5px;height:5px;background:#cfcfcf;opacity:.75;clip-path:polygon(100% 0,0 50%,100% 100%)"></div>
<div style="left:676.5px;top:375.5px;width:5px;height:5px;background:#cfcfcf;opacity:.75;clip-path:polygon(100% 0,0 50%,100% 100%)"></div>
<div style="left:685.5px;top:375.5px;width:5px;height:5px;background:#cfcfcf;opacity:.75;clip-path:polygon(100% 0,0 50%,100% 100%)"></div>
<div style="left:694.5px;top:375.5px;width:5px;height:5px;background:#cfcfcf;opacity:.75;clip-path:polygon(0 0,100% 50%,0 100%)"></div>
<div style="left:703.5px;top:375.5px;width:5px;height:5px;background:#cfcfcf;opacity:.75;clip-path:polygon(0 0,100% 50%,0 100%)"></div>
<div style="left:712.5px;top:375.5px;width:5px;height:5px;background:#cfcfcf;opacity:.75;clip-path:polygon(0 0,100% 50%,0 100%)"></div>
<div style="left:721.5px;top:375.5px;width:5px;height:5px;background:#cfcfcf;opacity:.75;clip-path:polygon(0 0,100% 50%,0 100%)"></div>
<div style="left:679px;top:374.5px;width:0.8px;height:7px;background:#d05050;"></div>
<div style="left:705px;top:374.5px;width:0.8px;height:7px;background:#d05050;"></div>
<div style="left:5.5px;top:387.7px;width:33.3px;height:8.7px;background:#2b2b2b;"></div>
<div class="t" style="left:8px;top:389.95px;font-size:4.5px;color:#ccc;letter-spacing:-0.060px;">0</div>
<div style="left:42.5px;top:387.7px;width:32.5px;height:8.7px;background:#2b2b2b;"></div>
<div class="t" style="left:45px;top:389.95px;font-size:4.5px;color:#ccc;letter-spacing:-0.060px;">0</div>
<div style="left:80px;top:387.7px;width:339px;height:8.7px;background:#5f5f5f;"></div>
<div style="left:419px;top:387.7px;width:48.3px;height:8.7px;background:#4a4a4a;"></div>
<div style="left:82.5px;top:389px;width:5px;height:6px;background:#9a9a9a;"></div>
<div class="t" style="left:89px;top:389.95px;font-size:4.5px;color:#ccc;letter-spacing:-0.060px;">0</div>
<div style="left:413px;top:389px;width:6px;height:6px;background:#9a9a9a;"></div>
<div class="t" style="left:403.5px;top:389.95px;font-size:4.5px;color:#ddd;letter-spacing:-0.060px;">220</div>
<div style="left:469.7px;top:387.7px;width:33.3px;height:8.7px;background:#2b2b2b;"></div>
<div class="t" style="left:472px;top:389.95px;font-size:4.5px;color:#ccc;letter-spacing:-0.060px;">220</div>
<div style="left:506.6px;top:387.7px;width:33.2px;height:8.7px;background:#2b2b2b;"></div>
<div class="t" style="left:509px;top:389.95px;font-size:4.5px;color:#ccc;letter-spacing:-0.060px;">250</div>
<div style="left:542px;top:388px;width:1px;height:8px;background:#aaa;"></div>
<div class="t" style="left:548px;top:388.95px;font-size:4.5px;color:#aaa;letter-spacing:-0.060px;">⁻</div>
<div style="left:555px;top:387.7px;width:36px;height:8.7px;background:#3d3d3d;"></div>
<div class="t" style="left:556px;top:389.85px;font-size:4.5px;color:#ccc;letter-spacing:-0.180px;">No Character Set</div>
<div style="left:595px;top:388.5px;width:7.5px;height:7px;background:#c03040;border-radius:50%"></div>
<div class="t" style="left:604px;top:389.85px;font-size:4.5px;color:#ccc;letter-spacing:-0.180px;">ulled__piece_01</div>
<div class="t" style="left:637px;top:389.25px;font-size:4.5px;color:#ccc;letter-spacing:-0.300px;">▾</div>
<div style="left:646px;top:388px;width:0.8px;height:8px;background:#5a5a5a;"></div>
<div style="left:651px;top:387.7px;width:36px;height:8.7px;background:#2d2d2d;"></div>
<div class="t" style="left:653px;top:389.85px;font-size:4.5px;color:#ccc;letter-spacing:-0.180px;">30 fps</div>
<div class="t" style="left:683px;top:389.25px;font-size:4.5px;color:#ccc;letter-spacing:-0.300px;">▾</div>
<div style="left:693.5px;top:389px;width:6px;height:4.5px;border:0.8px solid #ddd;border-radius:2px"></div>
<div style="left:708px;top:389px;width:6px;height:6px;border:0.8px solid #ddd;border-radius:50%"></div>
<div style="left:720px;top:388.5px;width:7px;height:7px;background:#d07040;clip-path:polygon(0 0,20% 0,50% 35%,80% 0,100% 0,65% 50%,100% 100%,80% 100%,50% 65%,20% 100%,0 100%,35% 50%)"></div>
<div class="t" style="left:650px;top:376px;font-size:10px;color:rgba(255,255,255,0.03);-webkit-text-stroke:0.4px rgba(255,255,255,0.13);font-weight:bold;letter-spacing:2.6px;transform:scaleY(0.85);transform-origin:0 0">GNOMON</div>
<div class="t" style="left:641px;top:388.5px;font-size:10px;color:rgba(255,255,255,0.03);-webkit-text-stroke:0.4px rgba(255,255,255,0.13);font-weight:bold;letter-spacing:1.6px;transform:scaleY(0.95);transform-origin:0 0">WORKSHOP</div>
<div style="left:634px;top:378px;width:13px;height:13px;border:1.2px solid rgba(255,255,255,0.08);border-radius:50%"></div>
<div style="left:0px;top:398px;width:732px;height:14px;background:#444;"></div>
<div class="t" style="left:9px;top:402.95px;font-size:4.5px;color:#ddd;letter-spacing:-0.060px;">MEL</div>
<div style="left:22px;top:400.8px;width:255px;height:9px;background:#2b2b2b;"></div>
<div style="left:278px;top:400.8px;width:1.2px;height:9px;background:#777;"></div>
<div style="left:279px;top:400.8px;width:442px;height:9px;background:#2b2b2b;"></div>
<div style="left:722px;top:401px;width:7px;height:7px;border:0.8px solid #ccc;background:#555"></div></body></html>
